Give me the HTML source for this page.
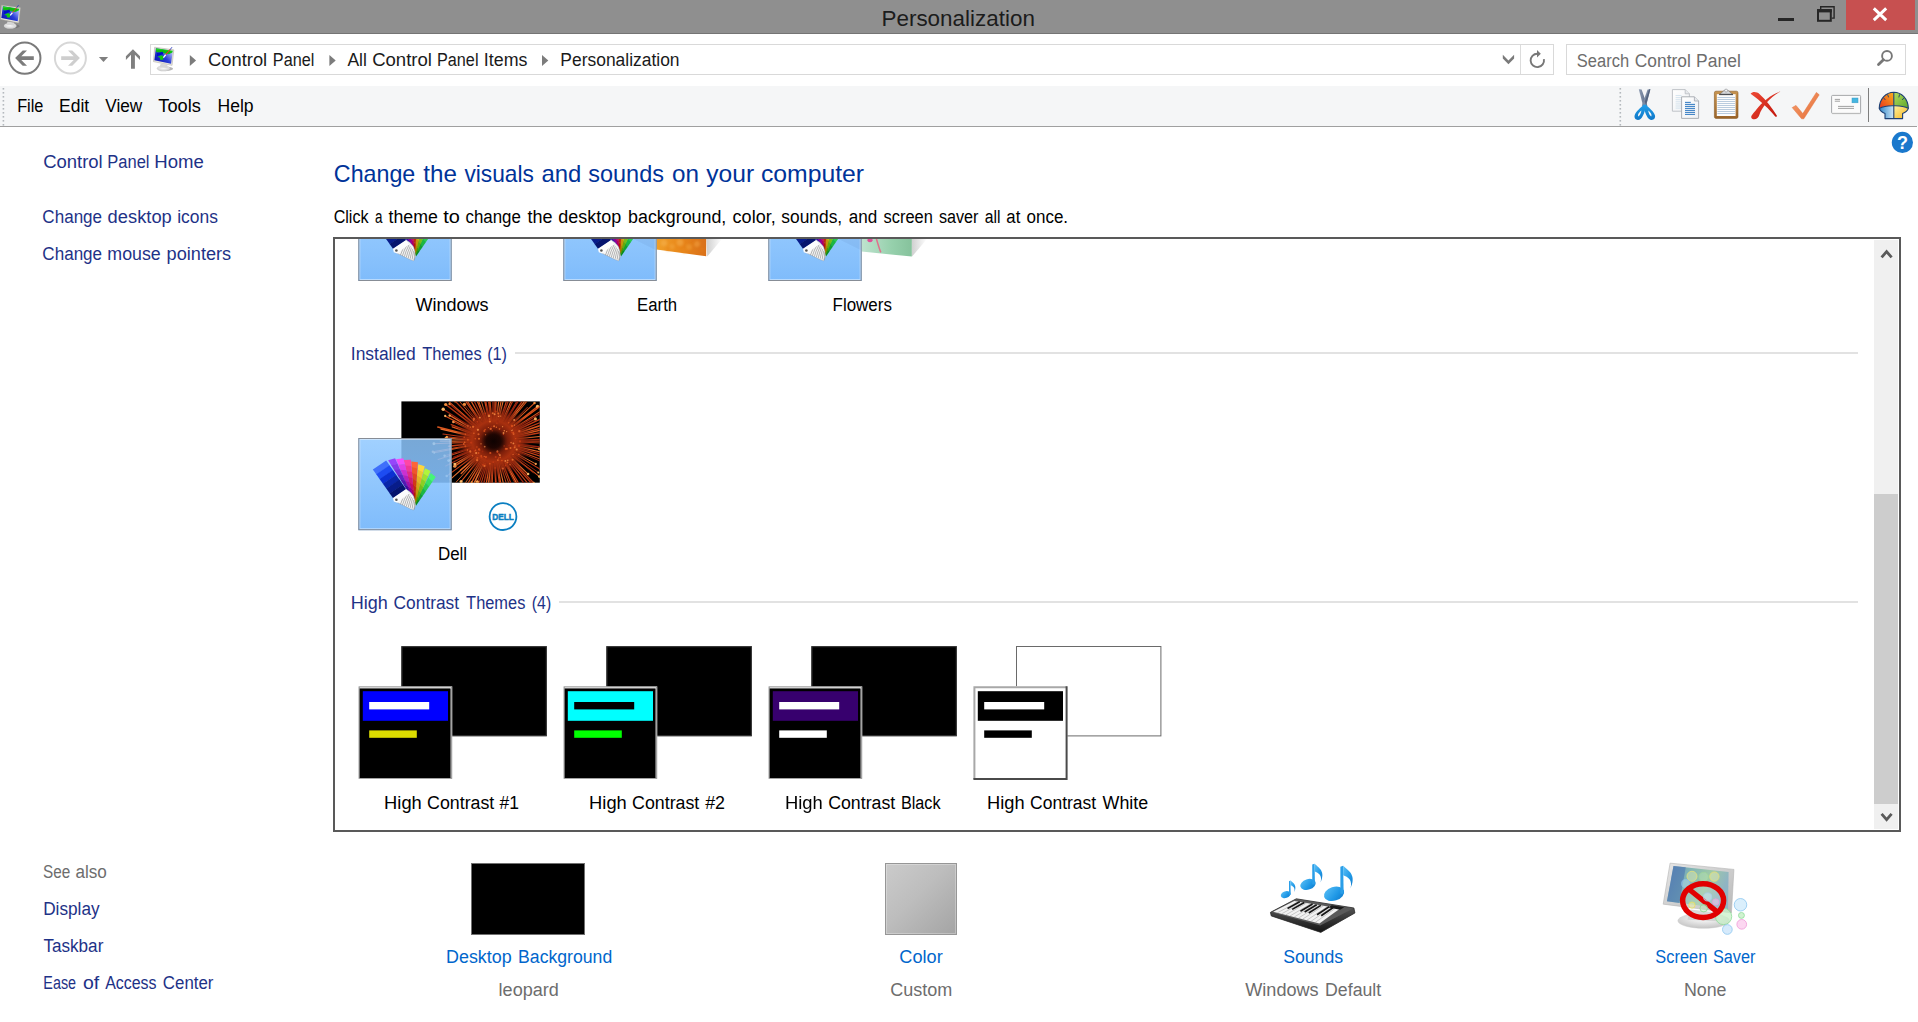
<!DOCTYPE html>
<html lang="en"><head><meta charset="utf-8"><title>Personalization</title>
<style>
html,body{margin:0;padding:0}
body{width:1918px;height:1022px;overflow:hidden;background:#fff;font-family:"Liberation Sans", sans-serif;position:relative}
.t{position:absolute;white-space:nowrap;line-height:1;transform-origin:0 0;display:block}
.abs{position:absolute}
svg{position:absolute;left:0;top:0;overflow:visible}
#titlebar{left:0;top:0;width:1918px;height:33px;background:#8f8f8f;border-bottom:1px solid #747474}
#closebtn{left:1846px;top:0;width:69px;height:30px;background:#c75050}
#navrow{left:0;top:34px;width:1918px;height:52px;background:#fff}
#addr{left:150px;top:44px;width:1402px;height:29px;border:1px solid #d9d9d9;background:#fff}
#addrsep{left:1520px;top:45px;width:1px;height:29px;background:#dcdcdc}
#search{left:1566px;top:44px;width:338px;height:29px;border:1px solid #d9d9d9;background:#fff}
#menubar{left:0;top:86px;width:1918px;height:40px;background:#f5f6f7}
#menuline{left:0;top:126px;width:1917px;height:1px;background:#a0a0a0}
#list{left:333px;top:237px;width:1564px;height:591px;border:2px solid #595959;background:#fff}
#sbar{left:1874px;top:240px;width:24px;height:589px;background:#f0f0f0}
#thumb{left:1874px;top:494px;width:24px;height:310px;background:#cdcdcd}
.gline{height:2px;background:#e2e2e2}
#deskbg{left:471px;top:863px;width:112px;height:70px;background:#000;border:1px solid #707070}
#colorsw{left:885px;top:863px;width:70px;height:70px;border:1px solid #969696;box-shadow:inset 0 0 0 1px rgba(255,255,255,0.28);background:linear-gradient(135deg,#cbcbcb 0%,#bdbdbd 45%,#a4a4a4 100%)}
</style></head>
<body>
<div id="titlebar" class="abs"></div>
<div id="closebtn" class="abs"></div>
<div id="navrow" class="abs"></div>
<div id="addr" class="abs"></div><div id="addrsep" class="abs"></div>
<div id="search" class="abs"></div>
<div id="menubar" class="abs"></div><div id="menuline" class="abs"></div>
<div id="list" class="abs"></div>
<div id="sbar" class="abs"></div><div id="thumb" class="abs"></div>
<div class="abs gline" style="left:515px;top:352px;width:1343px"></div>
<div class="abs gline" style="left:559px;top:601px;width:1299px"></div>
<div id="deskbg" class="abs"></div>
<div id="colorsw" class="abs"></div>
<svg width="1918" height="1022" viewBox="0 0 1918 1022">
<g id="i-title"><defs><linearGradient id="m0_5a" x1="0" y1="1" x2="1" y2="0.2"><stop offset="0" stop-color="#0008a8"/><stop offset="0.55" stop-color="#2a3fd8"/><stop offset="1" stop-color="#c9d0ff"/></linearGradient><radialGradient id="m0_5b" cx="0.5" cy="0.4" r="0.6"><stop offset="0" stop-color="#ffffff"/><stop offset="1" stop-color="#c9c9c9"/></radialGradient></defs><ellipse cx="12.50" cy="26.30" rx="7.20" ry="2.20" fill="#5a5a5a" opacity="0.45"/><ellipse cx="10.20" cy="25.90" rx="6.40" ry="2.90" fill="url(#m0_5b)"/><polygon points="7.50,21.50 14.00,22.50 14.50,25.50 6.50,25.00" fill="#d6d6d6"/><polygon points="1.60,5.20 20.40,7.80 18.70,23.00 0.40,19.30" fill="#e9e6dc" stroke="#a9a79f" stroke-width="0.5"/><polygon points="2.80,6.30 19.50,8.70 17.70,21.30 1.30,18.10" fill="url(#m0_5a)"/><polygon points="2.80,6.30 19.50,8.70 18.80,10.60 15.00,12.00 10.00,11.00 3.30,10.00" fill="#1fd11f"/><polygon points="3.00,8.20 9.50,7.60 18.90,9.60 16.00,11.60 10.00,10.60 3.30,10.00" fill="#10b810"/><polygon points="3.80,11.00 9.60,9.60 10.00,12.00 6.00,13.40 3.90,14.00" fill="#0010c8"/><polygon points="4.40,14.60 8.40,13.00 10.40,14.60 9.80,17.40 7.00,17.60 6.80,15.60" fill="#12c812"/><line x1="18.60" y1="5.20" x2="16.60" y2="7.80" stroke="#3040c0" stroke-width="0.90"/><line x1="16.80" y1="7.60" x2="12.20" y2="12.80" stroke="#e33a26" stroke-width="1.00"/><line x1="12.40" y1="12.60" x2="10.20" y2="15.40" stroke="#ffffff" stroke-width="1.30"/></g>
<g id="i-winbtn"><rect x="1778" y="18" width="16" height="3" fill="#262626"/><path d="M1820.7 9.2V6.7H1834.1V18.1H1831.8" fill="none" stroke="#262626" stroke-width="1.4"/><rect x="1818" y="10.2" width="12.8" height="10.6" fill="none" stroke="#262626" stroke-width="2"/><rect x="1817" y="9.2" width="14.8" height="3.2" fill="#262626"/><path d="M1873.8 8.4L1886.2 20.2M1886.2 8.4L1873.8 20.2" stroke="#fff" stroke-width="3"/></g>
<g id="i-nav"><circle cx="24.75" cy="58.1" r="15.7" fill="none" stroke="#7a7a7a" stroke-width="2"/><polygon points="15.1,58.1 22.7,50.5 27.0,50.5 21.3,56.2 33.8,56.2 33.8,59.9 21.3,59.9 27.0,65.7 22.7,65.7" fill="#7c7c7c"/><circle cx="70.4" cy="58.1" r="15.5" fill="none" stroke="#d7d7d7" stroke-width="2"/><polygon points="79.9,58.1 72.3,50.5 68.0,50.5 73.7,56.2 61.2,56.2 61.2,59.9 73.7,59.9 68.0,65.7 72.3,65.7" fill="#cecece"/><polygon points="98.9,57.0 108.1,57.0 103.5,62.0" fill="#7f7f7f"/><polygon points="132.95,49.3 125.9,56.3 125.9,59.9 131.0,54.8 131.0,68.7 134.9,68.7 134.9,54.8 140.0,59.9 140.0,56.3" fill="#7f7f7f"/></g>
<g id="i-addr"><defs><linearGradient id="m153_47a" x1="0" y1="1" x2="1" y2="0.2"><stop offset="0" stop-color="#0008a8"/><stop offset="0.55" stop-color="#2a3fd8"/><stop offset="1" stop-color="#c9d0ff"/></linearGradient><radialGradient id="m153_47b" cx="0.5" cy="0.4" r="0.6"><stop offset="0" stop-color="#ffffff"/><stop offset="1" stop-color="#c9c9c9"/></radialGradient></defs><ellipse cx="165.75" cy="68.73" rx="7.34" ry="2.24" fill="#5a5a5a" opacity="0.45"/><ellipse cx="163.40" cy="68.32" rx="6.53" ry="2.96" fill="url(#m153_47b)"/><polygon points="160.65,63.83 167.28,64.85 167.79,67.91 159.63,67.40" fill="#d6d6d6"/><polygon points="154.63,47.20 173.81,49.86 172.07,65.36 153.41,61.59" fill="#e9e6dc" stroke="#a9a79f" stroke-width="0.5"/><polygon points="155.86,48.33 172.89,50.77 171.05,63.63 154.33,60.36" fill="url(#m153_47a)"/><polygon points="155.86,48.33 172.89,50.77 172.18,52.71 168.30,54.14 163.20,53.12 156.37,52.10" fill="#1fd11f"/><polygon points="156.06,50.26 162.69,49.65 172.28,51.69 169.32,53.73 163.20,52.71 156.37,52.10" fill="#10b810"/><polygon points="156.88,53.12 162.79,51.69 163.20,54.14 159.12,55.57 156.98,56.18" fill="#0010c8"/><polygon points="157.49,56.79 161.57,55.16 163.61,56.79 163.00,59.65 160.14,59.85 159.94,57.81" fill="#12c812"/><line x1="171.97" y1="47.20" x2="169.93" y2="49.86" stroke="#3040c0" stroke-width="0.92"/><line x1="170.14" y1="49.65" x2="165.44" y2="54.96" stroke="#e33a26" stroke-width="1.02"/><line x1="165.65" y1="54.75" x2="163.40" y2="57.61" stroke="#ffffff" stroke-width="1.33"/><polygon points="189.8,54.9 196.10000000000002,60.4 189.8,65.9" fill="#7c7c7c"/><polygon points="329.4,54.9 335.7,60.4 329.4,65.9" fill="#7c7c7c"/><polygon points="542.0,54.9 548.3,60.4 542.0,65.9" fill="#7c7c7c"/><polygon points="1502.8,54.8 1502.8,58.5 1508.45,64.2 1514.1,58.5 1514.1,54.8 1508.45,60.5" fill="#7a7a7a"/><path d="M1543.9 59.2A6.7 6.7 0 1 1 1537.3 53.7" fill="none" stroke="#777" stroke-width="1.9"/><polygon points="1537.0,50.1 1540.8,53.8 1537.0,57.6" fill="#777"/><circle cx="1887.0" cy="55.9" r="4.9" fill="none" stroke="#777" stroke-width="1.9"/><line x1="1883.4" y1="59.8" x2="1878.5" y2="64.6" stroke="#777" stroke-width="2.8" stroke-linecap="round"/></g>
<g id="i-menu"><rect x="2.6" y="88" width="1.6" height="1.6" fill="#b4b8bd"/><rect x="2.6" y="92" width="1.6" height="1.6" fill="#b4b8bd"/><rect x="2.6" y="96" width="1.6" height="1.6" fill="#b4b8bd"/><rect x="2.6" y="100" width="1.6" height="1.6" fill="#b4b8bd"/><rect x="2.6" y="104" width="1.6" height="1.6" fill="#b4b8bd"/><rect x="2.6" y="108" width="1.6" height="1.6" fill="#b4b8bd"/><rect x="2.6" y="112" width="1.6" height="1.6" fill="#b4b8bd"/><rect x="2.6" y="116" width="1.6" height="1.6" fill="#b4b8bd"/><rect x="2.6" y="120" width="1.6" height="1.6" fill="#b4b8bd"/><rect x="2.6" y="124" width="1.6" height="1.6" fill="#b4b8bd"/></g>
<g id="i-tb"><defs>
<linearGradient id="tbBlade" x1="0" y1="0" x2="1" y2="0"><stop offset="0" stop-color="#8d9bb2"/><stop offset="1" stop-color="#55657f"/></linearGradient>
<linearGradient id="tbHandle" x1="0" y1="0" x2="0" y2="1"><stop offset="0" stop-color="#22a0ea"/><stop offset="1" stop-color="#0f77c8"/></linearGradient>
<linearGradient id="tbPage" x1="0" y1="0" x2="1" y2="1"><stop offset="0" stop-color="#ffffff"/><stop offset="1" stop-color="#eef0f3"/></linearGradient>
<linearGradient id="tbWood" x1="0" y1="0" x2="0" y2="1"><stop offset="0" stop-color="#c79450"/><stop offset="1" stop-color="#9a642a"/></linearGradient>
<linearGradient id="tbRed" x1="0" y1="0" x2="1" y2="1"><stop offset="0" stop-color="#ee4a36"/><stop offset="1" stop-color="#c2160c"/></linearGradient>
<linearGradient id="tbChk" x1="0" y1="0" x2="1" y2="1"><stop offset="0" stop-color="#f6a271"/><stop offset="1" stop-color="#e56a34"/></linearGradient>
<linearGradient id="shO" x1="0" y1="1" x2="1" y2="0"><stop offset="0" stop-color="#e8321a"/><stop offset="1" stop-color="#fbb21c"/></linearGradient>
<linearGradient id="shG" x1="0" y1="0" x2="1" y2="1"><stop offset="0" stop-color="#b6dc5a"/><stop offset="1" stop-color="#5aa62c"/></linearGradient>
<linearGradient id="shB" x1="0" y1="0" x2="1" y2="0"><stop offset="0" stop-color="#2f86c8"/><stop offset="1" stop-color="#cfe6f6"/></linearGradient>
<linearGradient id="shY" x1="0" y1="0" x2="1" y2="1"><stop offset="0" stop-color="#fff1a0"/><stop offset="1" stop-color="#f4b41a"/></linearGradient>
</defs><rect x="1619.5" y="88" width="1.6" height="1.6" fill="#b4b8bd"/><rect x="1619.5" y="92" width="1.6" height="1.6" fill="#b4b8bd"/><rect x="1619.5" y="96" width="1.6" height="1.6" fill="#b4b8bd"/><rect x="1619.5" y="100" width="1.6" height="1.6" fill="#b4b8bd"/><rect x="1619.5" y="104" width="1.6" height="1.6" fill="#b4b8bd"/><rect x="1619.5" y="108" width="1.6" height="1.6" fill="#b4b8bd"/><rect x="1619.5" y="112" width="1.6" height="1.6" fill="#b4b8bd"/><rect x="1619.5" y="116" width="1.6" height="1.6" fill="#b4b8bd"/><rect x="1619.5" y="120" width="1.6" height="1.6" fill="#b4b8bd"/><rect x="1619.5" y="124" width="1.6" height="1.6" fill="#b4b8bd"/><polygon points="1638.8,89.2 1641.6,89.4 1647.4,105.8 1643.4,107.0" fill="url(#tbBlade)"/><polygon points="1650.4,89.2 1647.6,89.4 1641.8,105.8 1645.8,107.0" fill="#7b8aa3"/><polygon points="1650.4,89.2 1649.2,89.3 1644.8,101.6 1646.0,105.2" fill="#55647e"/><path d="M1643.8 104.2C1641 108 1635.6 111 1634.6 115.6C1633.8 119.6 1638 121.4 1640.8 118.8C1643.6 116.2 1645 110.6 1646 106Z M1638.4 116.4C1637.4 115.4 1638.6 112.8 1641.4 110.6C1641 113.2 1639.8 116 1638.4 116.4Z" fill="url(#tbHandle)" fill-rule="evenodd"/><path d="M1645.8 104.2C1648.6 108 1654 111 1655 115.6C1655.8 119.6 1651.6 121.4 1648.8 118.8C1646 116.2 1644.6 110.6 1643.6 106Z M1651.2 116.4C1652.2 115.4 1651 112.8 1648.2 110.6C1648.6 113.2 1649.8 116 1651.2 116.4Z" fill="url(#tbHandle)" fill-rule="evenodd"/><path d="M1672.4 89.6H1685.2L1689.4 93.8V111.2H1672.4Z" fill="url(#tbPage)" stroke="#b9bcc2" stroke-width="0.9"/><path d="M1685.2 89.6V93.8H1689.4" fill="#e6e8ec" stroke="#b9bcc2" stroke-width="0.8"/><line x1="1675.6" y1="95.5" x2="1681.5" y2="95.5" stroke="#c9dbea" stroke-width="0.7"/><line x1="1675.6" y1="97.6" x2="1681.5" y2="97.6" stroke="#c9dbea" stroke-width="0.7"/><line x1="1675.6" y1="99.7" x2="1681.5" y2="99.7" stroke="#c9dbea" stroke-width="0.7"/><line x1="1675.6" y1="101.8" x2="1681.5" y2="101.8" stroke="#c9dbea" stroke-width="0.7"/><line x1="1675.6" y1="103.9" x2="1681.5" y2="103.9" stroke="#c9dbea" stroke-width="0.7"/><line x1="1675.6" y1="106.0" x2="1681.5" y2="106.0" stroke="#c9dbea" stroke-width="0.7"/><line x1="1675.6" y1="108.1" x2="1681.5" y2="108.1" stroke="#c9dbea" stroke-width="0.7"/><path d="M1681.6 96.8H1694.4L1698.6 101V118.4H1681.6Z" fill="url(#tbPage)" stroke="#a3a7ae" stroke-width="0.9"/><path d="M1694.4 96.8V101H1698.6" fill="#e6e8ec" stroke="#a3a7ae" stroke-width="0.8"/><line x1="1685" y1="102.4" x2="1690.8" y2="102.4" stroke="#3f82c6" stroke-width="1.1"/><line x1="1685" y1="104.4" x2="1695" y2="104.4" stroke="#3f82c6" stroke-width="1.1"/><line x1="1685" y1="106.4" x2="1695" y2="106.4" stroke="#3f82c6" stroke-width="1.1"/><line x1="1685" y1="108.4" x2="1695" y2="108.4" stroke="#3f82c6" stroke-width="1.1"/><line x1="1685" y1="110.4" x2="1695" y2="110.4" stroke="#3f82c6" stroke-width="1.1"/><line x1="1685" y1="112.4" x2="1695" y2="112.4" stroke="#3f82c6" stroke-width="1.1"/><line x1="1685" y1="114.4" x2="1695" y2="114.4" stroke="#3f82c6" stroke-width="1.1"/><rect x="1714.4" y="91.2" width="23.6" height="27.2" rx="1.6" fill="url(#tbWood)" stroke="#8a5a24" stroke-width="0.6"/><rect x="1716.8" y="94.2" width="18.8" height="21.8" fill="#fdfdfd"/><line x1="1717.4" y1="97.5" x2="1735" y2="97.5" stroke="#b2c6da" stroke-width="0.9"/><line x1="1717.4" y1="99.5" x2="1735" y2="99.5" stroke="#b2c6da" stroke-width="0.9"/><line x1="1717.4" y1="101.5" x2="1735" y2="101.5" stroke="#b2c6da" stroke-width="0.9"/><line x1="1717.4" y1="103.5" x2="1735" y2="103.5" stroke="#b2c6da" stroke-width="0.9"/><line x1="1717.4" y1="105.5" x2="1735" y2="105.5" stroke="#b2c6da" stroke-width="0.9"/><line x1="1717.4" y1="107.5" x2="1735" y2="107.5" stroke="#b2c6da" stroke-width="0.9"/><line x1="1717.4" y1="109.5" x2="1735" y2="109.5" stroke="#b2c6da" stroke-width="0.9"/><line x1="1717.4" y1="111.5" x2="1735" y2="111.5" stroke="#b2c6da" stroke-width="0.9"/><line x1="1717.4" y1="113.5" x2="1735" y2="113.5" stroke="#b2c6da" stroke-width="0.9"/><polygon points="1719.4,94.6 1724.2,90.4 1728.0,90.4 1732.8,94.6" fill="#d9dadc" stroke="#6d6f73" stroke-width="0.6"/><rect x="1719.2" y="93.8" width="13.8" height="1.3" fill="#4d4f53"/><circle cx="1726.1" cy="90.6" r="1.5" fill="#f5f5f5" stroke="#8a8c90" stroke-width="0.6"/><path d="M1780.4 91.6C1771 94.2 1761.6 102.6 1756.4 109.6C1753.4 113.8 1749.8 116.2 1751.8 118.4C1754.6 120.8 1758.6 118.4 1759.4 114.8C1761.6 108 1769 98 1780.4 91.6Z" fill="url(#tbRed)"/><path d="M1750.6 93.8C1752.6 91.2 1757 91.8 1759.4 94C1766 100 1772.4 108.2 1776.8 115.6C1777.2 116.8 1776 117.2 1775.2 116.4C1769.6 109.6 1760.6 101 1750.6 93.8Z" fill="url(#tbRed)"/><polygon points="1792.2,107.6 1796.0,105.4 1802.8,113.6 1816.4,92.4 1819.2,94.8 1803.8,118.8 1801.6,118.8" fill="url(#tbChk)" stroke="#e0733f" stroke-width="0.5" stroke-linejoin="round"/><rect x="1831.6" y="95.4" width="29" height="18" rx="1" fill="#fbfbfb" stroke="#9c9ea2" stroke-width="0.9"/><rect x="1832.2" y="113.2" width="28.6" height="0.9" fill="#bdbdbd"/><rect x="1852" y="98" width="6" height="4.8" fill="#46b6e0" stroke="#3a9cc6" stroke-width="0.5"/><line x1="1834.8" y1="99.4" x2="1840" y2="99.4" stroke="#8a8a8a" stroke-width="0.8"/><line x1="1834.8" y1="101.2" x2="1840" y2="101.2" stroke="#8a8a8a" stroke-width="0.8"/><line x1="1838" y1="106.4" x2="1854" y2="106.4" stroke="#8a8a8a" stroke-width="0.8"/><line x1="1838" y1="108.4" x2="1854" y2="108.4" stroke="#8a8a8a" stroke-width="0.8"/><rect x="1868" y="88" width="1" height="34" fill="#7e7e7e"/><path d="M1893.8 92.2C1886 92.2 1879.6 98.6 1879.2 108.4C1883 106.4 1888 105.6 1893.8 105.8Z" fill="url(#shO)"/><path d="M1893.8 92.2C1901.6 92.2 1908 98.6 1908.4 108.4C1904.6 106.4 1899.6 105.6 1893.8 105.8Z" fill="url(#shG)"/><path d="M1879.2 108.4C1883 106.4 1888 105.6 1893.8 105.8V118.6H1885V113.4C1882 112.4 1880 110.6 1879.2 108.4Z" fill="url(#shB)"/><path d="M1908.4 108.4C1904.6 106.4 1899.6 105.6 1893.8 105.8V118.6H1902.6V113.4C1905.6 112.4 1907.6 110.6 1908.4 108.4Z" fill="url(#shY)"/><path d="M1893.8 92.2C1886 92.2 1879.6 98.6 1879.2 108.4C1880 110.6 1882 112.4 1885 113.4V118.6H1902.6V113.4C1905.6 112.4 1907.6 110.6 1908.4 108.4C1908 98.6 1901.6 92.2 1893.8 92.2ZM1893.8 92.2V118.6M1879.2 108.4C1883 106.4 1888 105.6 1893.8 105.8C1899.6 105.6 1904.6 106.4 1908.4 108.4" fill="none" stroke="#1d3f73" stroke-width="1.1" stroke-linejoin="round"/><line x1="1883.4" y1="97.6" x2="1885.4" y2="100" stroke="#1d3f73" stroke-width="0.9"/><line x1="1887.6" y1="94.4" x2="1888.6" y2="97.4" stroke="#1d3f73" stroke-width="0.9"/><line x1="1899.6" y1="94.4" x2="1898.8" y2="97.4" stroke="#1d3f73" stroke-width="0.9"/><line x1="1904.2" y1="97.6" x2="1902.2" y2="100" stroke="#1d3f73" stroke-width="0.9"/></g>
<g id="i-help"><circle cx="1902.4" cy="142.4" r="10.6" fill="#1a78cc"/><text x="1902.4" y="149.0" text-anchor="middle" font-family="Liberation Sans, sans-serif" font-weight="bold" font-size="18" fill="#fff">?</text></g>
<g id="i-toprow"><defs><clipPath id="trc"><rect x="335" y="239" width="1539" height="60"/></clipPath><linearGradient id="earthg" x1="0" y1="0" x2="1" y2="0"><stop offset="0" stop-color="#f0a02a"/><stop offset="0.5" stop-color="#e8861a"/><stop offset="1" stop-color="#d9701a"/></linearGradient><linearGradient id="flowg" x1="0" y1="0" x2="1" y2="0"><stop offset="0" stop-color="#bfe3cf"/><stop offset="0.6" stop-color="#96d0ac"/><stop offset="1" stop-color="#86c29c"/></linearGradient><filter id="blr" x="-50%" y="-50%" width="200%" height="200%"><feGaussianBlur stdDeviation="0.9"/></filter><linearGradient id="shadg" x1="0" y1="0" x2="1" y2="0"><stop offset="0" stop-color="#cfcfcf"/><stop offset="1" stop-color="#ffffff"/></linearGradient></defs><g clip-path="url(#trc)"><polygon points="706.5,239 722,239 707.2,256.6" fill="url(#shadg)"/><polygon points="656.5,232 706.2,232 706.2,256.3 656.5,249.6" fill="url(#earthg)"/><circle cx="664" cy="243" r="3.2" fill="#f8b85a" opacity="0.44" filter="url(#blr)"/><circle cx="672" cy="246.5" r="2.6" fill="#f6ac48" opacity="0.40" filter="url(#blr)"/><circle cx="680" cy="242.5" r="3.4" fill="#f9bc60" opacity="0.40" filter="url(#blr)"/><circle cx="689" cy="247" r="3.0" fill="#f4a63c" opacity="0.44" filter="url(#blr)"/><circle cx="697" cy="244" r="3.0" fill="#f8b050" opacity="0.40" filter="url(#blr)"/><circle cx="702" cy="250" r="2.4" fill="#e27a16" opacity="0.48" filter="url(#blr)"/><circle cx="668" cy="249" r="2.2" fill="#e8881c" opacity="0.48" filter="url(#blr)"/><circle cx="684" cy="251" r="2.4" fill="#e98a20" opacity="0.40" filter="url(#blr)"/><circle cx="693" cy="240.5" r="2.2" fill="#e07818" opacity="0.40" filter="url(#blr)"/><polygon points="911.4,239 927,239 912,256.6" fill="url(#shadg)"/><polygon points="861.5,232 911.8,232 911.8,256.6 861.5,251.6" fill="url(#flowg)"/><path d="M876.2 238C877.6 243 879.0 248 880.8 252.4" fill="none" stroke="#e0708c" stroke-width="1.5"/><ellipse cx="870" cy="240.2" rx="2.6" ry="2.0" fill="#e0509a"/><defs><linearGradient id="btt0" x1="0" y1="0" x2="0" y2="1"><stop offset="0" stop-color="#8fc8ff" stop-opacity="0.84"/><stop offset="1" stop-color="#78b8fb" stop-opacity="0.95"/></linearGradient></defs><rect x="358.3" y="188.8" width="93.4" height="92.2" fill="url(#btt0)"/><rect x="359.8" y="190.3" width="90.4" height="89.2" fill="none" stroke="#ffffff" stroke-opacity="0.45" stroke-width="1"/><rect x="358.8" y="189.3" width="92.4" height="91.2" fill="none" stroke="#878d96" stroke-width="1"/><polygon points="430.85,223.86 435.69,227.84 432.21,232.92 428.07,228.95" fill="#46f578"/><polygon points="428.23,228.67 432.41,232.63 428.93,237.71 425.45,233.76" fill="#38e067"/><polygon points="425.61,233.47 429.12,237.42 425.64,242.50 422.83,238.57" fill="#2acb56"/><polygon points="422.99,238.28 425.84,242.21 422.36,247.29 420.21,243.38" fill="#1cb645"/><polygon points="420.37,243.09 422.56,247.00 419.08,252.08 417.59,248.19" fill="#0ea134"/><polygon points="417.75,247.90 419.28,251.79 415.80,256.87 414.97,252.99" fill="#008c23"/><polygon points="424.93,219.01 430.63,221.70 428.01,227.60 423.16,224.62" fill="#b0f53c"/><polygon points="423.26,224.31 428.16,227.27 425.53,233.16 421.49,229.92" fill="#9de230"/><polygon points="421.59,229.60 425.68,232.83 423.06,238.72 419.82,235.21" fill="#8acf24"/><polygon points="419.92,234.89 423.20,238.39 420.58,244.28 418.15,240.50" fill="#76bc18"/><polygon points="418.25,240.18 420.73,243.95 418.10,249.85 416.48,245.79" fill="#63a90c"/><polygon points="416.58,245.48 418.25,249.51 415.63,255.41 414.82,251.09" fill="#509600"/><polygon points="418.25,215.03 424.71,217.08 423.10,223.45 417.59,220.96" fill="#ffd63c"/><polygon points="417.63,220.63 423.19,223.09 421.57,229.46 416.96,226.56" fill="#f0c530"/><polygon points="417.00,226.23 421.66,229.10 420.05,235.47 416.33,232.16" fill="#e1b424"/><polygon points="416.37,231.82 420.14,235.11 418.52,241.48 415.70,237.76" fill="#d2a418"/><polygon points="415.74,237.42 418.61,241.12 417.00,247.49 415.08,243.35" fill="#c3930c"/><polygon points="415.11,243.02 417.09,247.13 415.47,253.50 414.45,248.95" fill="#b48200"/><polygon points="411.26,212.23 417.93,213.09 417.44,219.75 411.67,218.20" fill="#ff6437"/><polygon points="411.65,217.86 417.46,219.37 416.97,226.03 412.07,223.84" fill="#f0562c"/><polygon points="412.05,223.50 417.00,225.65 416.50,232.31 412.46,229.47" fill="#e14721"/><polygon points="412.44,229.13 416.53,231.93 416.04,238.59 412.86,235.10" fill="#d23916"/><polygon points="412.84,234.76 416.06,238.21 415.57,244.87 413.25,240.74" fill="#c32a0b"/><polygon points="413.23,240.40 415.60,244.49 415.10,251.14 413.65,246.37" fill="#b41c00"/><polygon points="403.72,210.72 410.83,210.51 411.43,217.09 405.13,216.54" fill="#ff46a5"/><polygon points="405.05,216.21 411.40,216.72 412.01,223.30 406.46,222.03" fill="#f03895"/><polygon points="406.38,221.70 411.97,222.92 412.58,229.50 407.78,227.52" fill="#e12a85"/><polygon points="407.70,227.19 412.55,229.13 413.16,235.71 409.11,233.01" fill="#d21c75"/><polygon points="409.03,232.68 413.12,235.34 413.73,241.92 410.44,238.50" fill="#c30e65"/><polygon points="410.36,238.17 413.70,241.55 414.30,248.13 411.77,243.99" fill="#b40055"/><polygon points="395.97,210.08 403.29,209.00 404.93,215.35 398.33,215.67" fill="#f550fa"/><polygon points="398.20,215.35 404.83,214.99 406.47,221.35 400.55,220.94" fill="#e040e6"/><polygon points="400.42,220.63 406.38,220.99 408.01,227.34 402.78,226.22" fill="#cb30d2"/><polygon points="402.64,225.90 407.92,226.98 409.55,233.33 405.00,231.49" fill="#b620be"/><polygon points="404.87,231.18 409.46,232.97 411.10,239.32 407.23,236.77" fill="#a110aa"/><polygon points="407.09,236.45 411.01,238.96 412.64,245.31 409.45,242.04" fill="#8c0096"/><polygon points="388.11,211.16 395.11,209.00 397.73,214.90 391.33,216.21" fill="#9646fa"/><polygon points="391.15,215.93 397.59,214.56 400.21,220.46 394.36,220.99" fill="#853ae8"/><polygon points="394.18,220.70 400.06,220.13 402.69,226.02 397.39,225.76" fill="#742fd6"/><polygon points="397.21,225.47 402.54,225.69 405.16,231.58 400.42,230.53" fill="#6223c4"/><polygon points="400.24,230.24 405.01,231.25 407.64,237.14 403.45,235.30" fill="#5118b2"/><polygon points="403.27,235.02 407.49,236.81 410.11,242.71 406.49,240.07" fill="#400ca0"/><polygon points="396.83,253.14 406.30,240.22 409.75,242.59 413.41,246.68 414.92,251.84 415.56,256.58 413.62,260.89 410.18,259.59" fill="#f6f6f6" stroke="#8e8e8e" stroke-width="0.35"/><path d="M406.74 241.73Q402.11 249.48 400.49 255.07" fill="none" stroke="#5e5e5e" stroke-width="0.45"/><path d="M407.90 243.23Q403.88 250.44 402.43 255.81" fill="none" stroke="#5e5e5e" stroke-width="0.45"/><path d="M409.07 244.74Q405.64 251.41 404.37 256.55" fill="none" stroke="#5e5e5e" stroke-width="0.45"/><path d="M410.24 246.25Q407.41 252.38 406.30 257.29" fill="none" stroke="#5e5e5e" stroke-width="0.45"/><path d="M411.41 247.75Q409.18 253.35 408.24 258.03" fill="none" stroke="#5e5e5e" stroke-width="0.45"/><path d="M412.58 249.26Q410.95 254.32 410.18 258.76" fill="none" stroke="#5e5e5e" stroke-width="0.45"/><path d="M413.75 250.77Q412.72 255.29 412.12 259.50" fill="none" stroke="#5e5e5e" stroke-width="0.45"/><path d="M414.92 252.27Q414.49 256.26 414.06 260.24" fill="none" stroke="#5e5e5e" stroke-width="0.45"/><polygon points="372.83,220.30 386.18,211.26 389.69,216.34 376.38,225.34" fill="#3f6ffb"/><polygon points="376.18,225.06 389.49,216.05 393.01,221.13 379.74,230.10" fill="#1d4cf2"/><polygon points="379.54,229.81 392.81,220.84 396.33,225.92 383.09,234.85" fill="#0b30d2"/><polygon points="382.89,234.57 396.13,225.63 399.65,230.71 386.45,239.61" fill="#0a26aa"/><polygon points="386.25,239.32 399.45,230.42 402.97,235.50 389.80,244.36" fill="#081c8a"/><polygon points="389.60,244.08 402.77,235.21 406.29,240.29 393.16,249.12" fill="#05146e"/><polygon points="392.96,248.72 406.09,239.90 409.10,244.31 397.26,253.57 393.82,252.27" fill="#fcfcfc"/><circle cx="396.40" cy="250.55" r="1.3" fill="#555"/><defs><linearGradient id="btt1" x1="0" y1="0" x2="0" y2="1"><stop offset="0" stop-color="#8fc8ff" stop-opacity="0.84"/><stop offset="1" stop-color="#78b8fb" stop-opacity="0.95"/></linearGradient></defs><rect x="563.3" y="188.8" width="93.4" height="92.2" fill="url(#btt1)"/><rect x="564.8" y="190.3" width="90.4" height="89.2" fill="none" stroke="#ffffff" stroke-opacity="0.45" stroke-width="1"/><rect x="563.8" y="189.3" width="92.4" height="91.2" fill="none" stroke="#878d96" stroke-width="1"/><polygon points="635.85,223.86 640.69,227.84 637.21,232.92 633.07,228.95" fill="#46f578"/><polygon points="633.23,228.67 637.41,232.63 633.93,237.71 630.45,233.76" fill="#38e067"/><polygon points="630.61,233.47 634.12,237.42 630.64,242.50 627.83,238.57" fill="#2acb56"/><polygon points="627.99,238.28 630.84,242.21 627.36,247.29 625.21,243.38" fill="#1cb645"/><polygon points="625.37,243.09 627.56,247.00 624.08,252.08 622.59,248.19" fill="#0ea134"/><polygon points="622.75,247.90 624.28,251.79 620.80,256.87 619.97,252.99" fill="#008c23"/><polygon points="629.93,219.01 635.63,221.70 633.01,227.60 628.16,224.62" fill="#b0f53c"/><polygon points="628.26,224.31 633.16,227.27 630.53,233.16 626.49,229.92" fill="#9de230"/><polygon points="626.59,229.60 630.68,232.83 628.06,238.72 624.82,235.21" fill="#8acf24"/><polygon points="624.92,234.89 628.20,238.39 625.58,244.28 623.15,240.50" fill="#76bc18"/><polygon points="623.25,240.18 625.73,243.95 623.10,249.85 621.48,245.79" fill="#63a90c"/><polygon points="621.58,245.48 623.25,249.51 620.63,255.41 619.82,251.09" fill="#509600"/><polygon points="623.25,215.03 629.71,217.08 628.10,223.45 622.59,220.96" fill="#ffd63c"/><polygon points="622.63,220.63 628.19,223.09 626.57,229.46 621.96,226.56" fill="#f0c530"/><polygon points="622.00,226.23 626.66,229.10 625.05,235.47 621.33,232.16" fill="#e1b424"/><polygon points="621.37,231.82 625.14,235.11 623.52,241.48 620.70,237.76" fill="#d2a418"/><polygon points="620.74,237.42 623.61,241.12 622.00,247.49 620.08,243.35" fill="#c3930c"/><polygon points="620.11,243.02 622.09,247.13 620.47,253.50 619.45,248.95" fill="#b48200"/><polygon points="616.26,212.23 622.93,213.09 622.44,219.75 616.67,218.20" fill="#ff6437"/><polygon points="616.65,217.86 622.46,219.37 621.97,226.03 617.07,223.84" fill="#f0562c"/><polygon points="617.05,223.50 622.00,225.65 621.50,232.31 617.46,229.47" fill="#e14721"/><polygon points="617.44,229.13 621.53,231.93 621.04,238.59 617.86,235.10" fill="#d23916"/><polygon points="617.84,234.76 621.06,238.21 620.57,244.87 618.25,240.74" fill="#c32a0b"/><polygon points="618.23,240.40 620.60,244.49 620.10,251.14 618.65,246.37" fill="#b41c00"/><polygon points="608.72,210.72 615.83,210.51 616.43,217.09 610.13,216.54" fill="#ff46a5"/><polygon points="610.05,216.21 616.40,216.72 617.01,223.30 611.46,222.03" fill="#f03895"/><polygon points="611.38,221.70 616.97,222.92 617.58,229.50 612.78,227.52" fill="#e12a85"/><polygon points="612.70,227.19 617.55,229.13 618.16,235.71 614.11,233.01" fill="#d21c75"/><polygon points="614.03,232.68 618.12,235.34 618.73,241.92 615.44,238.50" fill="#c30e65"/><polygon points="615.36,238.17 618.70,241.55 619.30,248.13 616.77,243.99" fill="#b40055"/><polygon points="600.97,210.08 608.29,209.00 609.93,215.35 603.33,215.67" fill="#f550fa"/><polygon points="603.20,215.35 609.83,214.99 611.47,221.35 605.55,220.94" fill="#e040e6"/><polygon points="605.42,220.63 611.38,220.99 613.01,227.34 607.78,226.22" fill="#cb30d2"/><polygon points="607.64,225.90 612.92,226.98 614.55,233.33 610.00,231.49" fill="#b620be"/><polygon points="609.87,231.18 614.46,232.97 616.10,239.32 612.23,236.77" fill="#a110aa"/><polygon points="612.09,236.45 616.01,238.96 617.64,245.31 614.45,242.04" fill="#8c0096"/><polygon points="593.11,211.16 600.11,209.00 602.73,214.90 596.33,216.21" fill="#9646fa"/><polygon points="596.15,215.93 602.59,214.56 605.21,220.46 599.36,220.99" fill="#853ae8"/><polygon points="599.18,220.70 605.06,220.13 607.69,226.02 602.39,225.76" fill="#742fd6"/><polygon points="602.21,225.47 607.54,225.69 610.16,231.58 605.42,230.53" fill="#6223c4"/><polygon points="605.24,230.24 610.01,231.25 612.64,237.14 608.45,235.30" fill="#5118b2"/><polygon points="608.27,235.02 612.49,236.81 615.11,242.71 611.49,240.07" fill="#400ca0"/><polygon points="601.83,253.14 611.30,240.22 614.75,242.59 618.41,246.68 619.92,251.84 620.56,256.58 618.62,260.89 615.18,259.59" fill="#f6f6f6" stroke="#8e8e8e" stroke-width="0.35"/><path d="M611.74 241.73Q607.11 249.48 605.49 255.07" fill="none" stroke="#5e5e5e" stroke-width="0.45"/><path d="M612.90 243.23Q608.88 250.44 607.43 255.81" fill="none" stroke="#5e5e5e" stroke-width="0.45"/><path d="M614.07 244.74Q610.64 251.41 609.37 256.55" fill="none" stroke="#5e5e5e" stroke-width="0.45"/><path d="M615.24 246.25Q612.41 252.38 611.30 257.29" fill="none" stroke="#5e5e5e" stroke-width="0.45"/><path d="M616.41 247.75Q614.18 253.35 613.24 258.03" fill="none" stroke="#5e5e5e" stroke-width="0.45"/><path d="M617.58 249.26Q615.95 254.32 615.18 258.76" fill="none" stroke="#5e5e5e" stroke-width="0.45"/><path d="M618.75 250.77Q617.72 255.29 617.12 259.50" fill="none" stroke="#5e5e5e" stroke-width="0.45"/><path d="M619.92 252.27Q619.49 256.26 619.06 260.24" fill="none" stroke="#5e5e5e" stroke-width="0.45"/><polygon points="577.83,220.30 591.18,211.26 594.69,216.34 581.38,225.34" fill="#3f6ffb"/><polygon points="581.18,225.06 594.49,216.05 598.01,221.13 584.74,230.10" fill="#1d4cf2"/><polygon points="584.54,229.81 597.81,220.84 601.33,225.92 588.09,234.85" fill="#0b30d2"/><polygon points="587.89,234.57 601.13,225.63 604.65,230.71 591.45,239.61" fill="#0a26aa"/><polygon points="591.25,239.32 604.45,230.42 607.97,235.50 594.80,244.36" fill="#081c8a"/><polygon points="594.60,244.08 607.77,235.21 611.29,240.29 598.16,249.12" fill="#05146e"/><polygon points="597.96,248.72 611.09,239.90 614.10,244.31 602.26,253.57 598.82,252.27" fill="#fcfcfc"/><circle cx="601.40" cy="250.55" r="1.3" fill="#555"/><polygon points="633.6999999999999,239 655.6999999999999,239 655.6999999999999,250" fill="#5f86b8" opacity="0.13"/><defs><linearGradient id="btt2" x1="0" y1="0" x2="0" y2="1"><stop offset="0" stop-color="#8fc8ff" stop-opacity="0.84"/><stop offset="1" stop-color="#78b8fb" stop-opacity="0.95"/></linearGradient></defs><rect x="768.3" y="188.8" width="93.4" height="92.2" fill="url(#btt2)"/><rect x="769.8" y="190.3" width="90.4" height="89.2" fill="none" stroke="#ffffff" stroke-opacity="0.45" stroke-width="1"/><rect x="768.8" y="189.3" width="92.4" height="91.2" fill="none" stroke="#878d96" stroke-width="1"/><polygon points="840.85,223.86 845.69,227.84 842.21,232.92 838.07,228.95" fill="#46f578"/><polygon points="838.23,228.67 842.41,232.63 838.93,237.71 835.45,233.76" fill="#38e067"/><polygon points="835.61,233.47 839.12,237.42 835.64,242.50 832.83,238.57" fill="#2acb56"/><polygon points="832.99,238.28 835.84,242.21 832.36,247.29 830.21,243.38" fill="#1cb645"/><polygon points="830.37,243.09 832.56,247.00 829.08,252.08 827.59,248.19" fill="#0ea134"/><polygon points="827.75,247.90 829.28,251.79 825.80,256.87 824.97,252.99" fill="#008c23"/><polygon points="834.93,219.01 840.63,221.70 838.01,227.60 833.16,224.62" fill="#b0f53c"/><polygon points="833.26,224.31 838.16,227.27 835.53,233.16 831.49,229.92" fill="#9de230"/><polygon points="831.59,229.60 835.68,232.83 833.06,238.72 829.82,235.21" fill="#8acf24"/><polygon points="829.92,234.89 833.20,238.39 830.58,244.28 828.15,240.50" fill="#76bc18"/><polygon points="828.25,240.18 830.73,243.95 828.10,249.85 826.48,245.79" fill="#63a90c"/><polygon points="826.58,245.48 828.25,249.51 825.63,255.41 824.82,251.09" fill="#509600"/><polygon points="828.25,215.03 834.71,217.08 833.10,223.45 827.59,220.96" fill="#ffd63c"/><polygon points="827.63,220.63 833.19,223.09 831.57,229.46 826.96,226.56" fill="#f0c530"/><polygon points="827.00,226.23 831.66,229.10 830.05,235.47 826.33,232.16" fill="#e1b424"/><polygon points="826.37,231.82 830.14,235.11 828.52,241.48 825.70,237.76" fill="#d2a418"/><polygon points="825.74,237.42 828.61,241.12 827.00,247.49 825.08,243.35" fill="#c3930c"/><polygon points="825.11,243.02 827.09,247.13 825.47,253.50 824.45,248.95" fill="#b48200"/><polygon points="821.26,212.23 827.93,213.09 827.44,219.75 821.67,218.20" fill="#ff6437"/><polygon points="821.65,217.86 827.46,219.37 826.97,226.03 822.07,223.84" fill="#f0562c"/><polygon points="822.05,223.50 827.00,225.65 826.50,232.31 822.46,229.47" fill="#e14721"/><polygon points="822.44,229.13 826.53,231.93 826.04,238.59 822.86,235.10" fill="#d23916"/><polygon points="822.84,234.76 826.06,238.21 825.57,244.87 823.25,240.74" fill="#c32a0b"/><polygon points="823.23,240.40 825.60,244.49 825.10,251.14 823.65,246.37" fill="#b41c00"/><polygon points="813.72,210.72 820.83,210.51 821.43,217.09 815.13,216.54" fill="#ff46a5"/><polygon points="815.05,216.21 821.40,216.72 822.01,223.30 816.46,222.03" fill="#f03895"/><polygon points="816.38,221.70 821.97,222.92 822.58,229.50 817.78,227.52" fill="#e12a85"/><polygon points="817.70,227.19 822.55,229.13 823.16,235.71 819.11,233.01" fill="#d21c75"/><polygon points="819.03,232.68 823.12,235.34 823.73,241.92 820.44,238.50" fill="#c30e65"/><polygon points="820.36,238.17 823.70,241.55 824.30,248.13 821.77,243.99" fill="#b40055"/><polygon points="805.97,210.08 813.29,209.00 814.93,215.35 808.33,215.67" fill="#f550fa"/><polygon points="808.20,215.35 814.83,214.99 816.47,221.35 810.55,220.94" fill="#e040e6"/><polygon points="810.42,220.63 816.38,220.99 818.01,227.34 812.78,226.22" fill="#cb30d2"/><polygon points="812.64,225.90 817.92,226.98 819.55,233.33 815.00,231.49" fill="#b620be"/><polygon points="814.87,231.18 819.46,232.97 821.10,239.32 817.23,236.77" fill="#a110aa"/><polygon points="817.09,236.45 821.01,238.96 822.64,245.31 819.45,242.04" fill="#8c0096"/><polygon points="798.11,211.16 805.11,209.00 807.73,214.90 801.33,216.21" fill="#9646fa"/><polygon points="801.15,215.93 807.59,214.56 810.21,220.46 804.36,220.99" fill="#853ae8"/><polygon points="804.18,220.70 810.06,220.13 812.69,226.02 807.39,225.76" fill="#742fd6"/><polygon points="807.21,225.47 812.54,225.69 815.16,231.58 810.42,230.53" fill="#6223c4"/><polygon points="810.24,230.24 815.01,231.25 817.64,237.14 813.45,235.30" fill="#5118b2"/><polygon points="813.27,235.02 817.49,236.81 820.11,242.71 816.49,240.07" fill="#400ca0"/><polygon points="806.83,253.14 816.30,240.22 819.75,242.59 823.41,246.68 824.92,251.84 825.56,256.58 823.62,260.89 820.18,259.59" fill="#f6f6f6" stroke="#8e8e8e" stroke-width="0.35"/><path d="M816.74 241.73Q812.11 249.48 810.49 255.07" fill="none" stroke="#5e5e5e" stroke-width="0.45"/><path d="M817.90 243.23Q813.88 250.44 812.43 255.81" fill="none" stroke="#5e5e5e" stroke-width="0.45"/><path d="M819.07 244.74Q815.64 251.41 814.37 256.55" fill="none" stroke="#5e5e5e" stroke-width="0.45"/><path d="M820.24 246.25Q817.41 252.38 816.30 257.29" fill="none" stroke="#5e5e5e" stroke-width="0.45"/><path d="M821.41 247.75Q819.18 253.35 818.24 258.03" fill="none" stroke="#5e5e5e" stroke-width="0.45"/><path d="M822.58 249.26Q820.95 254.32 820.18 258.76" fill="none" stroke="#5e5e5e" stroke-width="0.45"/><path d="M823.75 250.77Q822.72 255.29 822.12 259.50" fill="none" stroke="#5e5e5e" stroke-width="0.45"/><path d="M824.92 252.27Q824.49 256.26 824.06 260.24" fill="none" stroke="#5e5e5e" stroke-width="0.45"/><polygon points="782.83,220.30 796.18,211.26 799.69,216.34 786.38,225.34" fill="#3f6ffb"/><polygon points="786.18,225.06 799.49,216.05 803.01,221.13 789.74,230.10" fill="#1d4cf2"/><polygon points="789.54,229.81 802.81,220.84 806.33,225.92 793.09,234.85" fill="#0b30d2"/><polygon points="792.89,234.57 806.13,225.63 809.65,230.71 796.45,239.61" fill="#0a26aa"/><polygon points="796.25,239.32 809.45,230.42 812.97,235.50 799.80,244.36" fill="#081c8a"/><polygon points="799.60,244.08 812.77,235.21 816.29,240.29 803.16,249.12" fill="#05146e"/><polygon points="802.96,248.72 816.09,239.90 819.10,244.31 807.26,253.57 803.82,252.27" fill="#fcfcfc"/><circle cx="806.40" cy="250.55" r="1.3" fill="#555"/><polygon points="838.6999999999999,239 860.6999999999999,239 860.6999999999999,250" fill="#5f86b8" opacity="0.13"/></g></g>
<g id="i-dell"><defs><clipPath id="dfc"><rect x="401.4" y="401.4" width="138.4" height="81.3"/></clipPath><radialGradient id="dfg" cx="0.5" cy="0.5" r="0.5"><stop offset="0" stop-color="#140402"/><stop offset="0.2" stop-color="#2a0803"/><stop offset="0.36" stop-color="#7a1e0a"/><stop offset="0.55" stop-color="#a8300f"/><stop offset="0.75" stop-color="#8f250c" stop-opacity="0.8"/><stop offset="1" stop-color="#50100a" stop-opacity="0"/></radialGradient><radialGradient id="dfg2" cx="0.5" cy="0.5" r="0.5"><stop offset="0" stop-color="#0e0201"/><stop offset="0.6" stop-color="#1c0502" stop-opacity="0.9"/><stop offset="1" stop-color="#401006" stop-opacity="0"/></radialGradient></defs><rect x="401.4" y="401.4" width="138.4" height="81.3" fill="#000"/><g clip-path="url(#dfc)"><line x1="513.2" y1="441.2" x2="558.1" y2="441.0" stroke="#bf3a16" stroke-width="1.17" stroke-linecap="round"/><line x1="515.6" y1="442.0" x2="549.2" y2="443.3" stroke="#b83614" stroke-width="0.96" stroke-linecap="round"/><circle cx="549.2" cy="443.3" r="1.38" fill="#f7a04a"/><line x1="513.8" y1="443.8" x2="551.1" y2="448.5" stroke="#982410" stroke-width="1.48" stroke-linecap="round"/><line x1="509.0" y1="443.8" x2="539.5" y2="448.9" stroke="#d8561e" stroke-width="0.94" stroke-linecap="round"/><circle cx="539.5" cy="448.9" r="1.42" fill="#f3b060"/><line x1="510.4" y1="445.1" x2="550.0" y2="454.2" stroke="#e26226" stroke-width="1.21" stroke-linecap="round"/><line x1="513.5" y1="446.6" x2="546.9" y2="455.7" stroke="#a32a10" stroke-width="1.14" stroke-linecap="round"/><circle cx="546.9" cy="455.7" r="1.50" fill="#f7a04a"/><line x1="509.1" y1="446.2" x2="543.0" y2="457.1" stroke="#c8421a" stroke-width="1.24" stroke-linecap="round"/><circle cx="543.0" cy="457.1" r="1.59" fill="#f7a04a"/><line x1="515.6" y1="449.7" x2="552.4" y2="463.8" stroke="#d9501c" stroke-width="1.03" stroke-linecap="round"/><line x1="509.9" y1="448.2" x2="549.0" y2="464.9" stroke="#982410" stroke-width="0.94" stroke-linecap="round"/><line x1="508.3" y1="449.1" x2="535.8" y2="463.9" stroke="#e87030" stroke-width="0.91" stroke-linecap="round"/><circle cx="535.8" cy="463.9" r="1.09" fill="#f7a04a"/><line x1="505.7" y1="448.5" x2="541.0" y2="469.8" stroke="#bf3a16" stroke-width="1.01" stroke-linecap="round"/><circle cx="541.0" cy="469.8" r="1.36" fill="#f0904a"/><line x1="511.4" y1="453.6" x2="538.3" y2="472.4" stroke="#982410" stroke-width="0.97" stroke-linecap="round"/><circle cx="538.3" cy="472.4" r="1.00" fill="#f3b060"/><line x1="512.4" y1="455.7" x2="539.5" y2="476.6" stroke="#d9501c" stroke-width="1.03" stroke-linecap="round"/><circle cx="539.5" cy="476.6" r="1.45" fill="#f9b868"/><line x1="512.3" y1="456.1" x2="533.1" y2="472.6" stroke="#a32a10" stroke-width="0.91" stroke-linecap="round"/><line x1="506.5" y1="453.5" x2="528.1" y2="474.1" stroke="#e26226" stroke-width="1.25" stroke-linecap="round"/><circle cx="528.1" cy="474.1" r="1.26" fill="#f9b868"/><line x1="504.2" y1="452.2" x2="533.7" y2="482.9" stroke="#b83614" stroke-width="1.42" stroke-linecap="round"/><circle cx="533.7" cy="482.9" r="1.22" fill="#f3b060"/><line x1="507.0" y1="456.1" x2="534.1" y2="486.2" stroke="#b83614" stroke-width="1.34" stroke-linecap="round"/><line x1="508.4" y1="459.5" x2="533.7" y2="490.7" stroke="#c8421a" stroke-width="1.15" stroke-linecap="round"/><circle cx="533.7" cy="490.7" r="1.36" fill="#f7a04a"/><line x1="506.1" y1="458.6" x2="525.2" y2="485.0" stroke="#982410" stroke-width="1.39" stroke-linecap="round"/><circle cx="525.2" cy="485.0" r="1.36" fill="#ee8a3a"/><line x1="505.8" y1="461.6" x2="518.5" y2="483.0" stroke="#bf3a16" stroke-width="1.24" stroke-linecap="round"/><line x1="501.7" y1="455.9" x2="524.5" y2="497.7" stroke="#e26226" stroke-width="1.35" stroke-linecap="round"/><circle cx="524.5" cy="497.7" r="1.31" fill="#f0904a"/><line x1="500.8" y1="455.2" x2="518.0" y2="488.8" stroke="#b83614" stroke-width="0.96" stroke-linecap="round"/><circle cx="518.0" cy="488.8" r="1.69" fill="#f0904a"/><line x1="501.6" y1="460.5" x2="515.6" y2="494.6" stroke="#b83614" stroke-width="1.25" stroke-linecap="round"/><line x1="499.6" y1="457.7" x2="511.4" y2="490.4" stroke="#d9501c" stroke-width="0.91" stroke-linecap="round"/><line x1="499.8" y1="461.6" x2="508.8" y2="491.5" stroke="#c8421a" stroke-width="0.95" stroke-linecap="round"/><circle cx="508.8" cy="491.5" r="1.63" fill="#f7a04a"/><line x1="498.4" y1="461.7" x2="507.6" y2="501.5" stroke="#e87030" stroke-width="1.11" stroke-linecap="round"/><line x1="497.4" y1="463.6" x2="502.6" y2="494.9" stroke="#d9501c" stroke-width="1.42" stroke-linecap="round"/><circle cx="502.6" cy="494.9" r="1.46" fill="#f9b868"/><line x1="495.6" y1="455.2" x2="500.2" y2="488.4" stroke="#c8421a" stroke-width="1.28" stroke-linecap="round"/><line x1="494.9" y1="462.4" x2="496.9" y2="495.0" stroke="#bf3a16" stroke-width="1.16" stroke-linecap="round"/><line x1="494.6" y1="462.7" x2="495.8" y2="487.9" stroke="#c8421a" stroke-width="1.19" stroke-linecap="round"/><circle cx="495.8" cy="487.9" r="1.35" fill="#f7a04a"/><line x1="492.8" y1="464.4" x2="491.9" y2="492.4" stroke="#d9501c" stroke-width="1.12" stroke-linecap="round"/><circle cx="491.9" cy="492.4" r="1.14" fill="#f9b868"/><line x1="492.1" y1="464.2" x2="489.8" y2="500.3" stroke="#bf3a16" stroke-width="1.20" stroke-linecap="round"/><circle cx="489.8" cy="500.3" r="1.47" fill="#f0904a"/><line x1="491.4" y1="459.4" x2="486.3" y2="502.9" stroke="#e26226" stroke-width="1.43" stroke-linecap="round"/><circle cx="486.3" cy="502.9" r="1.64" fill="#f9b868"/><line x1="491.0" y1="456.3" x2="484.5" y2="493.6" stroke="#d9501c" stroke-width="1.33" stroke-linecap="round"/><line x1="490.0" y1="456.5" x2="481.9" y2="491.6" stroke="#a32a10" stroke-width="1.46" stroke-linecap="round"/><line x1="488.2" y1="459.6" x2="477.8" y2="494.8" stroke="#bf3a16" stroke-width="1.09" stroke-linecap="round"/><line x1="487.0" y1="460.2" x2="475.2" y2="494.1" stroke="#a32a10" stroke-width="1.24" stroke-linecap="round"/><circle cx="475.2" cy="494.1" r="1.01" fill="#f9b868"/><line x1="486.7" y1="458.4" x2="477.3" y2="481.9" stroke="#a32a10" stroke-width="1.04" stroke-linecap="round"/><circle cx="477.3" cy="481.9" r="1.69" fill="#f7a04a"/><line x1="487.3" y1="454.9" x2="471.2" y2="489.6" stroke="#e87030" stroke-width="1.48" stroke-linecap="round"/><line x1="484.8" y1="457.7" x2="471.6" y2="482.4" stroke="#d9501c" stroke-width="1.35" stroke-linecap="round"/><circle cx="471.6" cy="482.4" r="1.13" fill="#f7a04a"/><line x1="484.5" y1="456.1" x2="464.2" y2="489.3" stroke="#d8561e" stroke-width="1.20" stroke-linecap="round"/><line x1="481.0" y1="459.8" x2="462.0" y2="487.9" stroke="#e26226" stroke-width="0.95" stroke-linecap="round"/><line x1="484.0" y1="453.1" x2="461.1" y2="481.6" stroke="#d9501c" stroke-width="1.13" stroke-linecap="round"/><circle cx="461.1" cy="481.6" r="1.56" fill="#f9b868"/><line x1="481.0" y1="454.9" x2="456.1" y2="482.2" stroke="#e26226" stroke-width="0.96" stroke-linecap="round"/><line x1="477.1" y1="457.6" x2="461.2" y2="473.5" stroke="#e26226" stroke-width="1.44" stroke-linecap="round"/><line x1="479.1" y1="454.0" x2="450.0" y2="479.6" stroke="#e87030" stroke-width="1.06" stroke-linecap="round"/><line x1="479.2" y1="453.7" x2="460.3" y2="470.2" stroke="#e87030" stroke-width="1.23" stroke-linecap="round"/><line x1="482.1" y1="449.7" x2="446.7" y2="476.1" stroke="#c8421a" stroke-width="1.16" stroke-linecap="round"/><circle cx="446.7" cy="476.1" r="1.23" fill="#f9b868"/><line x1="480.6" y1="449.5" x2="454.8" y2="466.2" stroke="#d8561e" stroke-width="1.44" stroke-linecap="round"/><circle cx="454.8" cy="466.2" r="1.66" fill="#f0904a"/><line x1="473.4" y1="453.1" x2="454.8" y2="464.1" stroke="#e26226" stroke-width="1.16" stroke-linecap="round"/><circle cx="454.8" cy="464.1" r="1.45" fill="#f9b868"/><line x1="473.7" y1="451.5" x2="445.8" y2="466.0" stroke="#a32a10" stroke-width="1.30" stroke-linecap="round"/><line x1="475.2" y1="449.2" x2="448.6" y2="460.6" stroke="#b83614" stroke-width="1.48" stroke-linecap="round"/><circle cx="448.6" cy="460.6" r="1.35" fill="#f9b868"/><line x1="479.5" y1="446.8" x2="453.2" y2="457.2" stroke="#982410" stroke-width="0.92" stroke-linecap="round"/><line x1="476.5" y1="446.8" x2="438.2" y2="459.5" stroke="#c8421a" stroke-width="1.19" stroke-linecap="round"/><line x1="475.0" y1="446.7" x2="444.6" y2="455.7" stroke="#982410" stroke-width="1.06" stroke-linecap="round"/><circle cx="444.6" cy="455.7" r="1.24" fill="#f3b060"/><line x1="470.7" y1="445.7" x2="434.2" y2="452.8" stroke="#d8561e" stroke-width="1.09" stroke-linecap="round"/><circle cx="434.2" cy="452.8" r="1.02" fill="#f9b868"/><line x1="472.9" y1="444.8" x2="432.9" y2="451.7" stroke="#d9501c" stroke-width="1.02" stroke-linecap="round"/><circle cx="432.9" cy="451.7" r="1.23" fill="#ee8a3a"/><line x1="473.5" y1="443.5" x2="448.5" y2="446.3" stroke="#c8421a" stroke-width="1.41" stroke-linecap="round"/><line x1="472.6" y1="442.1" x2="433.9" y2="443.7" stroke="#d9501c" stroke-width="1.13" stroke-linecap="round"/><circle cx="433.9" cy="443.7" r="1.43" fill="#f9b868"/><line x1="471.0" y1="441.2" x2="440.3" y2="441.1" stroke="#e26226" stroke-width="1.22" stroke-linecap="round"/><line x1="471.1" y1="439.9" x2="446.0" y2="438.4" stroke="#e87030" stroke-width="1.44" stroke-linecap="round"/><circle cx="446.0" cy="438.4" r="1.62" fill="#ee8a3a"/><line x1="471.9" y1="439.2" x2="446.8" y2="436.9" stroke="#c8421a" stroke-width="0.98" stroke-linecap="round"/><circle cx="446.8" cy="436.9" r="1.18" fill="#f7a04a"/><line x1="471.5" y1="438.1" x2="442.9" y2="434.1" stroke="#b83614" stroke-width="1.02" stroke-linecap="round"/><line x1="479.0" y1="437.8" x2="441.0" y2="429.0" stroke="#e87030" stroke-width="1.45" stroke-linecap="round"/><line x1="475.1" y1="436.5" x2="437.8" y2="427.1" stroke="#d8561e" stroke-width="1.50" stroke-linecap="round"/><line x1="475.8" y1="435.0" x2="452.2" y2="426.8" stroke="#d8561e" stroke-width="1.27" stroke-linecap="round"/><line x1="478.8" y1="435.4" x2="451.2" y2="424.7" stroke="#b83614" stroke-width="1.40" stroke-linecap="round"/><line x1="480.1" y1="434.7" x2="453.4" y2="421.9" stroke="#bf3a16" stroke-width="0.95" stroke-linecap="round"/><circle cx="453.4" cy="421.9" r="1.33" fill="#f0904a"/><line x1="477.4" y1="432.7" x2="445.2" y2="416.0" stroke="#d9501c" stroke-width="1.28" stroke-linecap="round"/><circle cx="445.2" cy="416.0" r="1.13" fill="#f3b060"/><line x1="475.1" y1="430.4" x2="449.7" y2="415.4" stroke="#e26226" stroke-width="1.26" stroke-linecap="round"/><circle cx="449.7" cy="415.4" r="1.23" fill="#f7a04a"/><line x1="474.7" y1="429.2" x2="443.2" y2="409.2" stroke="#982410" stroke-width="1.24" stroke-linecap="round"/><circle cx="443.2" cy="409.2" r="1.69" fill="#f9b868"/><line x1="480.4" y1="431.1" x2="445.7" y2="404.5" stroke="#b83614" stroke-width="1.39" stroke-linecap="round"/><circle cx="445.7" cy="404.5" r="1.62" fill="#ee8a3a"/><line x1="477.1" y1="427.2" x2="449.6" y2="404.0" stroke="#982410" stroke-width="1.02" stroke-linecap="round"/><circle cx="449.6" cy="404.0" r="1.21" fill="#ee8a3a"/><line x1="476.5" y1="426.0" x2="447.3" y2="400.2" stroke="#d9501c" stroke-width="1.04" stroke-linecap="round"/><line x1="481.6" y1="428.6" x2="455.1" y2="401.0" stroke="#b83614" stroke-width="1.22" stroke-linecap="round"/><circle cx="455.1" cy="401.0" r="1.45" fill="#f0904a"/><line x1="479.5" y1="424.8" x2="453.5" y2="394.4" stroke="#d9501c" stroke-width="0.97" stroke-linecap="round"/><circle cx="453.5" cy="394.4" r="1.18" fill="#f3b060"/><line x1="484.6" y1="429.8" x2="464.4" y2="404.3" stroke="#982410" stroke-width="0.91" stroke-linecap="round"/><circle cx="464.4" cy="404.3" r="1.63" fill="#ee8a3a"/><line x1="482.7" y1="425.6" x2="458.4" y2="390.9" stroke="#c8421a" stroke-width="1.28" stroke-linecap="round"/><line x1="482.6" y1="424.5" x2="462.1" y2="393.1" stroke="#d9501c" stroke-width="1.13" stroke-linecap="round"/><line x1="482.0" y1="420.5" x2="464.6" y2="389.5" stroke="#d8561e" stroke-width="1.27" stroke-linecap="round"/><circle cx="464.6" cy="389.5" r="1.29" fill="#f0904a"/><line x1="484.9" y1="423.2" x2="471.7" y2="396.0" stroke="#a32a10" stroke-width="1.19" stroke-linecap="round"/><circle cx="471.7" cy="396.0" r="1.46" fill="#ee8a3a"/><line x1="488.2" y1="428.0" x2="471.8" y2="387.7" stroke="#d9501c" stroke-width="1.28" stroke-linecap="round"/><circle cx="471.8" cy="387.7" r="1.04" fill="#f0904a"/><line x1="487.3" y1="424.3" x2="474.7" y2="390.4" stroke="#e87030" stroke-width="0.94" stroke-linecap="round"/><line x1="488.1" y1="423.2" x2="475.6" y2="382.4" stroke="#e26226" stroke-width="0.93" stroke-linecap="round"/><circle cx="475.6" cy="382.4" r="1.10" fill="#f0904a"/><line x1="490.1" y1="425.1" x2="481.4" y2="386.0" stroke="#d9501c" stroke-width="1.27" stroke-linecap="round"/><circle cx="481.4" cy="386.0" r="1.60" fill="#f3b060"/><line x1="490.6" y1="425.9" x2="483.3" y2="388.8" stroke="#b83614" stroke-width="1.30" stroke-linecap="round"/><circle cx="483.3" cy="388.8" r="1.45" fill="#ee8a3a"/><line x1="491.4" y1="423.7" x2="486.1" y2="380.7" stroke="#b83614" stroke-width="1.47" stroke-linecap="round"/><line x1="492.2" y1="426.1" x2="487.7" y2="377.6" stroke="#d8561e" stroke-width="1.27" stroke-linecap="round"/><circle cx="487.7" cy="377.6" r="1.43" fill="#ee8a3a"/><line x1="493.3" y1="420.2" x2="492.8" y2="391.2" stroke="#a32a10" stroke-width="1.35" stroke-linecap="round"/><circle cx="492.8" cy="391.2" r="1.35" fill="#f3b060"/><line x1="494.1" y1="425.2" x2="495.6" y2="381.5" stroke="#d9501c" stroke-width="0.91" stroke-linecap="round"/><circle cx="495.6" cy="381.5" r="1.44" fill="#f7a04a"/><line x1="494.8" y1="421.8" x2="496.5" y2="393.7" stroke="#c8421a" stroke-width="1.45" stroke-linecap="round"/><circle cx="496.5" cy="393.7" r="1.44" fill="#f3b060"/><line x1="496.0" y1="422.6" x2="500.0" y2="391.2" stroke="#e87030" stroke-width="1.20" stroke-linecap="round"/><circle cx="500.0" cy="391.2" r="1.56" fill="#f7a04a"/><line x1="497.7" y1="419.4" x2="505.1" y2="379.5" stroke="#e26226" stroke-width="1.17" stroke-linecap="round"/><line x1="497.2" y1="426.1" x2="505.0" y2="393.3" stroke="#e87030" stroke-width="1.07" stroke-linecap="round"/><line x1="498.4" y1="426.1" x2="511.6" y2="384.9" stroke="#c8421a" stroke-width="1.18" stroke-linecap="round"/><circle cx="511.6" cy="384.9" r="1.06" fill="#f9b868"/><line x1="500.1" y1="423.5" x2="514.1" y2="385.0" stroke="#a32a10" stroke-width="1.39" stroke-linecap="round"/><circle cx="514.1" cy="385.0" r="1.15" fill="#ee8a3a"/><line x1="499.5" y1="427.6" x2="514.3" y2="393.3" stroke="#e87030" stroke-width="1.07" stroke-linecap="round"/><circle cx="514.3" cy="393.3" r="1.46" fill="#ee8a3a"/><line x1="503.5" y1="420.4" x2="516.2" y2="393.7" stroke="#bf3a16" stroke-width="1.24" stroke-linecap="round"/><line x1="505.3" y1="421.2" x2="521.2" y2="393.8" stroke="#a32a10" stroke-width="1.17" stroke-linecap="round"/><circle cx="521.2" cy="393.8" r="1.17" fill="#f9b868"/><line x1="502.9" y1="426.2" x2="521.6" y2="395.7" stroke="#982410" stroke-width="1.25" stroke-linecap="round"/><line x1="503.9" y1="426.9" x2="525.1" y2="397.4" stroke="#b83614" stroke-width="1.40" stroke-linecap="round"/><circle cx="525.1" cy="397.4" r="1.06" fill="#f3b060"/><line x1="507.5" y1="423.4" x2="531.9" y2="392.1" stroke="#e26226" stroke-width="1.21" stroke-linecap="round"/><circle cx="531.9" cy="392.1" r="1.21" fill="#f9b868"/><line x1="508.0" y1="424.0" x2="528.5" y2="399.3" stroke="#d8561e" stroke-width="1.08" stroke-linecap="round"/><circle cx="528.5" cy="399.3" r="1.06" fill="#ee8a3a"/><line x1="509.8" y1="424.9" x2="527.4" y2="407.3" stroke="#b83614" stroke-width="0.96" stroke-linecap="round"/><line x1="509.1" y1="426.8" x2="534.5" y2="403.1" stroke="#d8561e" stroke-width="1.10" stroke-linecap="round"/><circle cx="534.5" cy="403.1" r="1.24" fill="#ee8a3a"/><line x1="509.9" y1="428.4" x2="537.5" y2="406.5" stroke="#d8561e" stroke-width="1.38" stroke-linecap="round"/><circle cx="537.5" cy="406.5" r="1.64" fill="#f9b868"/><line x1="511.4" y1="427.8" x2="541.1" y2="405.6" stroke="#d9501c" stroke-width="1.38" stroke-linecap="round"/><line x1="513.5" y1="428.6" x2="543.3" y2="409.6" stroke="#d8561e" stroke-width="1.12" stroke-linecap="round"/><circle cx="543.3" cy="409.6" r="1.30" fill="#f7a04a"/><line x1="506.9" y1="433.3" x2="545.9" y2="410.1" stroke="#982410" stroke-width="1.31" stroke-linecap="round"/><circle cx="545.9" cy="410.1" r="1.30" fill="#f0904a"/><line x1="514.5" y1="430.1" x2="535.4" y2="418.9" stroke="#a32a10" stroke-width="1.34" stroke-linecap="round"/><circle cx="535.4" cy="418.9" r="1.54" fill="#f3b060"/><line x1="506.8" y1="434.9" x2="543.6" y2="417.6" stroke="#bf3a16" stroke-width="1.45" stroke-linecap="round"/><circle cx="543.6" cy="417.6" r="1.14" fill="#f7a04a"/><line x1="512.1" y1="433.8" x2="547.5" y2="419.7" stroke="#bf3a16" stroke-width="1.26" stroke-linecap="round"/><circle cx="547.5" cy="419.7" r="1.63" fill="#f3b060"/><line x1="515.5" y1="433.8" x2="555.0" y2="420.6" stroke="#d8561e" stroke-width="1.47" stroke-linecap="round"/><circle cx="555.0" cy="420.6" r="1.34" fill="#ee8a3a"/><line x1="516.3" y1="434.9" x2="550.7" y2="425.3" stroke="#c8421a" stroke-width="1.19" stroke-linecap="round"/><circle cx="550.7" cy="425.3" r="1.15" fill="#f7a04a"/><line x1="515.0" y1="436.2" x2="557.4" y2="426.2" stroke="#d8561e" stroke-width="1.36" stroke-linecap="round"/><line x1="516.5" y1="437.0" x2="556.4" y2="429.7" stroke="#bf3a16" stroke-width="1.44" stroke-linecap="round"/><circle cx="556.4" cy="429.7" r="1.50" fill="#f3b060"/><line x1="509.1" y1="439.6" x2="542.7" y2="436.2" stroke="#e87030" stroke-width="0.99" stroke-linecap="round"/><line x1="508.9" y1="440.6" x2="554.4" y2="438.9" stroke="#a32a10" stroke-width="1.21" stroke-linecap="round"/><circle cx="554.4" cy="438.9" r="1.54" fill="#f9b868"/><ellipse cx="493.6" cy="441.2" rx="39" ry="37" fill="url(#dfg)"/><circle cx="520.0" cy="441.4" r="1.09" fill="#c23a14" opacity="0.9"/><circle cx="507.0" cy="448.8" r="0.92" fill="#e0602a" opacity="0.9"/><circle cx="512.0" cy="425.9" r="1.17" fill="#d8501c" opacity="0.9"/><circle cx="470.4" cy="427.1" r="0.61" fill="#e86a2a" opacity="0.9"/><circle cx="498.9" cy="454.0" r="0.65" fill="#e0602a" opacity="0.9"/><circle cx="500.1" cy="428.6" r="0.85" fill="#9c2810" opacity="0.9"/><circle cx="464.7" cy="442.3" r="0.79" fill="#e86a2a" opacity="0.9"/><circle cx="476.1" cy="453.0" r="1.00" fill="#f08a44" opacity="0.9"/><circle cx="504.1" cy="445.9" r="0.66" fill="#c23a14" opacity="0.9"/><circle cx="478.5" cy="453.1" r="0.99" fill="#d8501c" opacity="0.9"/><circle cx="511.1" cy="442.6" r="0.89" fill="#e0602a" opacity="0.9"/><circle cx="490.3" cy="453.0" r="1.11" fill="#d8501c" opacity="0.9"/><circle cx="507.2" cy="421.0" r="0.69" fill="#9c2810" opacity="0.9"/><circle cx="473.6" cy="420.5" r="0.78" fill="#e0602a" opacity="0.9"/><circle cx="484.3" cy="456.4" r="0.65" fill="#e0602a" opacity="0.9"/><circle cx="500.2" cy="457.4" r="0.80" fill="#d8501c" opacity="0.9"/><circle cx="513.6" cy="434.0" r="0.98" fill="#e0602a" opacity="0.9"/><circle cx="476.9" cy="447.0" r="0.68" fill="#d8501c" opacity="0.9"/><circle cx="513.1" cy="454.4" r="0.71" fill="#e0602a" opacity="0.9"/><circle cx="497.4" cy="451.3" r="0.96" fill="#f08a44" opacity="0.9"/><circle cx="505.9" cy="449.0" r="1.19" fill="#c23a14" opacity="0.9"/><circle cx="470.3" cy="451.5" r="1.15" fill="#e86a2a" opacity="0.9"/><circle cx="475.5" cy="450.2" r="0.72" fill="#e0602a" opacity="0.9"/><circle cx="507.8" cy="460.3" r="0.80" fill="#f08a44" opacity="0.9"/><circle cx="484.8" cy="446.6" r="0.97" fill="#f08a44" opacity="0.9"/><circle cx="483.0" cy="464.7" r="1.00" fill="#c23a14" opacity="0.9"/><circle cx="485.6" cy="434.7" r="0.71" fill="#e86a2a" opacity="0.9"/><circle cx="487.0" cy="458.8" r="0.83" fill="#9c2810" opacity="0.9"/><circle cx="467.9" cy="439.7" r="0.97" fill="#d8501c" opacity="0.9"/><circle cx="507.4" cy="462.4" r="0.93" fill="#e86a2a" opacity="0.9"/><circle cx="481.6" cy="457.2" r="0.94" fill="#c23a14" opacity="0.9"/><circle cx="502.8" cy="468.4" r="1.02" fill="#e0602a" opacity="0.9"/><circle cx="513.2" cy="432.8" r="0.98" fill="#d8501c" opacity="0.9"/><circle cx="497.4" cy="452.2" r="0.89" fill="#c23a14" opacity="0.9"/><circle cx="479.1" cy="449.5" r="1.16" fill="#d8501c" opacity="0.9"/><circle cx="481.2" cy="455.9" r="0.87" fill="#d8501c" opacity="0.9"/><circle cx="491.7" cy="426.5" r="0.93" fill="#9c2810" opacity="0.9"/><circle cx="473.9" cy="433.3" r="0.70" fill="#e86a2a" opacity="0.9"/><circle cx="492.8" cy="413.3" r="0.96" fill="#e86a2a" opacity="0.9"/><circle cx="512.6" cy="459.7" r="1.01" fill="#e86a2a" opacity="0.9"/><circle cx="477.1" cy="460.2" r="1.10" fill="#e86a2a" opacity="0.9"/><circle cx="501.9" cy="460.5" r="0.87" fill="#d8501c" opacity="0.9"/><circle cx="472.5" cy="455.8" r="0.68" fill="#e0602a" opacity="0.9"/><circle cx="494.6" cy="414.3" r="0.97" fill="#f08a44" opacity="0.9"/><circle cx="477.5" cy="421.7" r="0.72" fill="#c23a14" opacity="0.9"/><circle cx="481.0" cy="443.8" r="0.67" fill="#f08a44" opacity="0.9"/><circle cx="479.7" cy="450.5" r="0.76" fill="#c23a14" opacity="0.9"/><circle cx="478.5" cy="434.3" r="1.07" fill="#e0602a" opacity="0.9"/><circle cx="489.0" cy="415.9" r="1.18" fill="#f08a44" opacity="0.9"/><circle cx="477.9" cy="429.8" r="1.14" fill="#f08a44" opacity="0.9"/><circle cx="511.8" cy="430.1" r="1.05" fill="#f08a44" opacity="0.9"/><circle cx="463.8" cy="443.9" r="0.85" fill="#e0602a" opacity="0.9"/><circle cx="474.1" cy="449.8" r="0.80" fill="#9c2810" opacity="0.9"/><circle cx="475.3" cy="438.8" r="0.79" fill="#d8501c" opacity="0.9"/><circle cx="516.7" cy="449.5" r="1.04" fill="#f08a44" opacity="0.9"/><circle cx="473.1" cy="426.8" r="1.13" fill="#e86a2a" opacity="0.9"/><circle cx="504.3" cy="430.8" r="0.75" fill="#f08a44" opacity="0.9"/><circle cx="514.2" cy="420.1" r="1.02" fill="#f08a44" opacity="0.9"/><circle cx="479.0" cy="438.8" r="0.99" fill="#e86a2a" opacity="0.9"/><circle cx="519.3" cy="431.1" r="1.18" fill="#e0602a" opacity="0.9"/><circle cx="479.8" cy="417.6" r="0.94" fill="#f08a44" opacity="0.9"/><circle cx="505.4" cy="460.9" r="0.94" fill="#f08a44" opacity="0.9"/><circle cx="503.4" cy="434.4" r="0.67" fill="#c23a14" opacity="0.9"/><circle cx="465.4" cy="434.4" r="0.78" fill="#d8501c" opacity="0.9"/><circle cx="492.2" cy="430.8" r="0.64" fill="#c23a14" opacity="0.9"/><circle cx="514.4" cy="425.1" r="0.68" fill="#f08a44" opacity="0.9"/><circle cx="488.4" cy="427.5" r="0.62" fill="#e86a2a" opacity="0.9"/><circle cx="506.6" cy="431.6" r="0.69" fill="#f08a44" opacity="0.9"/><circle cx="497.9" cy="416.0" r="0.72" fill="#c23a14" opacity="0.9"/><circle cx="508.7" cy="422.7" r="0.72" fill="#d8501c" opacity="0.9"/><circle cx="502.6" cy="426.7" r="0.61" fill="#f08a44" opacity="0.9"/><circle cx="477.8" cy="423.2" r="0.72" fill="#9c2810" opacity="0.9"/><circle cx="484.3" cy="431.0" r="0.99" fill="#d8501c" opacity="0.9"/><circle cx="484.5" cy="465.9" r="1.12" fill="#e86a2a" opacity="0.9"/><circle cx="490.7" cy="428.8" r="1.17" fill="#e0602a" opacity="0.9"/><circle cx="496.9" cy="423.2" r="0.73" fill="#c23a14" opacity="0.9"/><circle cx="485.1" cy="463.9" r="0.76" fill="#c23a14" opacity="0.9"/><circle cx="489.9" cy="421.5" r="1.07" fill="#e86a2a" opacity="0.9"/><circle cx="477.4" cy="457.9" r="0.95" fill="#d8501c" opacity="0.9"/><circle cx="495.7" cy="457.1" r="1.00" fill="#c23a14" opacity="0.9"/><circle cx="489.8" cy="463.7" r="0.88" fill="#d8501c" opacity="0.9"/><circle cx="518.8" cy="454.3" r="0.92" fill="#d8501c" opacity="0.9"/><circle cx="514.7" cy="447.4" r="0.92" fill="#e86a2a" opacity="0.9"/><circle cx="474.7" cy="451.1" r="0.77" fill="#c23a14" opacity="0.9"/><circle cx="494.1" cy="426.3" r="1.04" fill="#e86a2a" opacity="0.9"/><circle cx="519.0" cy="445.8" r="1.19" fill="#c23a14" opacity="0.9"/><circle cx="512.4" cy="445.2" r="0.83" fill="#9c2810" opacity="0.9"/><circle cx="511.7" cy="432.6" r="0.64" fill="#c23a14" opacity="0.9"/><circle cx="498.3" cy="413.4" r="0.99" fill="#e86a2a" opacity="0.9"/><circle cx="497.8" cy="421.3" r="1.10" fill="#9c2810" opacity="0.9"/><circle cx="473.9" cy="419.0" r="1.17" fill="#e0602a" opacity="0.9"/><circle cx="505.4" cy="463.9" r="0.67" fill="#c23a14" opacity="0.9"/><circle cx="472.1" cy="450.4" r="1.06" fill="#9c2810" opacity="0.9"/><circle cx="499.5" cy="416.1" r="0.76" fill="#c23a14" opacity="0.9"/><circle cx="467.6" cy="433.8" r="0.90" fill="#9c2810" opacity="0.9"/><circle cx="515.0" cy="446.0" r="0.63" fill="#e0602a" opacity="0.9"/><circle cx="467.4" cy="450.0" r="0.69" fill="#e86a2a" opacity="0.9"/><circle cx="513.4" cy="443.4" r="0.90" fill="#f08a44" opacity="0.9"/><circle cx="489.0" cy="414.5" r="0.64" fill="#d8501c" opacity="0.9"/><circle cx="511.5" cy="429.4" r="0.95" fill="#9c2810" opacity="0.9"/><circle cx="489.7" cy="419.1" r="0.79" fill="#d8501c" opacity="0.9"/><circle cx="509.3" cy="445.5" r="1.04" fill="#9c2810" opacity="0.9"/><circle cx="498.5" cy="416.4" r="0.65" fill="#f08a44" opacity="0.9"/><circle cx="499.4" cy="429.1" r="0.75" fill="#e86a2a" opacity="0.9"/><circle cx="470.4" cy="441.7" r="1.07" fill="#9c2810" opacity="0.9"/><circle cx="510.5" cy="448.0" r="1.02" fill="#e86a2a" opacity="0.9"/><circle cx="485.3" cy="413.3" r="0.89" fill="#c23a14" opacity="0.9"/><circle cx="495.7" cy="411.6" r="1.05" fill="#c23a14" opacity="0.9"/><circle cx="464.2" cy="437.2" r="0.74" fill="#d8501c" opacity="0.9"/><circle cx="503.5" cy="433.0" r="0.93" fill="#f08a44" opacity="0.9"/><circle cx="465.3" cy="446.2" r="1.01" fill="#d8501c" opacity="0.9"/><circle cx="487.5" cy="412.3" r="0.74" fill="#9c2810" opacity="0.9"/><circle cx="493.2" cy="462.2" r="0.85" fill="#c23a14" opacity="0.9"/><circle cx="506.1" cy="448.7" r="0.80" fill="#e86a2a" opacity="0.9"/><circle cx="515.7" cy="438.6" r="0.70" fill="#d8501c" opacity="0.9"/><circle cx="467.9" cy="425.9" r="0.81" fill="#e0602a" opacity="0.9"/><circle cx="484.3" cy="415.5" r="1.15" fill="#9c2810" opacity="0.9"/><circle cx="505.6" cy="465.6" r="0.83" fill="#c23a14" opacity="0.9"/><circle cx="496.4" cy="427.2" r="0.75" fill="#e86a2a" opacity="0.9"/><circle cx="500.6" cy="416.1" r="0.72" fill="#f08a44" opacity="0.9"/><circle cx="497.9" cy="460.1" r="0.88" fill="#e86a2a" opacity="0.9"/><circle cx="471.1" cy="442.6" r="1.12" fill="#c23a14" opacity="0.9"/><circle cx="498.6" cy="458.1" r="0.63" fill="#d8501c" opacity="0.9"/><circle cx="488.8" cy="469.8" r="0.61" fill="#9c2810" opacity="0.9"/><circle cx="499.9" cy="455.1" r="0.94" fill="#f08a44" opacity="0.9"/><circle cx="485.1" cy="429.6" r="0.82" fill="#d8501c" opacity="0.9"/><circle cx="510.0" cy="464.8" r="0.68" fill="#e86a2a" opacity="0.9"/><circle cx="495.1" cy="467.9" r="0.61" fill="#d8501c" opacity="0.9"/><circle cx="485.9" cy="457.1" r="1.11" fill="#d8501c" opacity="0.9"/><circle cx="482.5" cy="451.5" r="1.00" fill="#9c2810" opacity="0.9"/><ellipse cx="493.6" cy="441.2" rx="12" ry="11" fill="url(#dfg2)"/></g><defs><linearGradient id="btd" x1="0" y1="0" x2="0" y2="1"><stop offset="0" stop-color="#8fc8ff" stop-opacity="0.84"/><stop offset="1" stop-color="#78b8fb" stop-opacity="0.95"/></linearGradient></defs><rect x="358.3" y="438.0" width="93.4" height="92.2" fill="url(#btd)"/><rect x="359.8" y="439.5" width="90.4" height="89.2" fill="none" stroke="#ffffff" stroke-opacity="0.45" stroke-width="1"/><rect x="358.8" y="438.5" width="92.4" height="91.2" fill="none" stroke="#878d96" stroke-width="1"/><polygon points="430.85,473.06 435.69,477.04 432.21,482.12 428.07,478.15" fill="#46f578"/><polygon points="428.23,477.87 432.41,481.83 428.93,486.91 425.45,482.96" fill="#38e067"/><polygon points="425.61,482.67 429.12,486.62 425.64,491.70 422.83,487.77" fill="#2acb56"/><polygon points="422.99,487.48 425.84,491.41 422.36,496.49 420.21,492.58" fill="#1cb645"/><polygon points="420.37,492.29 422.56,496.20 419.08,501.28 417.59,497.39" fill="#0ea134"/><polygon points="417.75,497.10 419.28,500.99 415.80,506.07 414.97,502.19" fill="#008c23"/><polygon points="424.93,468.21 430.63,470.90 428.01,476.80 423.16,473.82" fill="#b0f53c"/><polygon points="423.26,473.51 428.16,476.47 425.53,482.36 421.49,479.12" fill="#9de230"/><polygon points="421.59,478.80 425.68,482.03 423.06,487.92 419.82,484.41" fill="#8acf24"/><polygon points="419.92,484.09 423.20,487.59 420.58,493.48 418.15,489.70" fill="#76bc18"/><polygon points="418.25,489.38 420.73,493.15 418.10,499.05 416.48,494.99" fill="#63a90c"/><polygon points="416.58,494.68 418.25,498.71 415.63,504.61 414.82,500.29" fill="#509600"/><polygon points="418.25,464.23 424.71,466.28 423.10,472.65 417.59,470.16" fill="#ffd63c"/><polygon points="417.63,469.83 423.19,472.29 421.57,478.66 416.96,475.76" fill="#f0c530"/><polygon points="417.00,475.43 421.66,478.30 420.05,484.67 416.33,481.36" fill="#e1b424"/><polygon points="416.37,481.02 420.14,484.31 418.52,490.68 415.70,486.96" fill="#d2a418"/><polygon points="415.74,486.62 418.61,490.32 417.00,496.69 415.08,492.55" fill="#c3930c"/><polygon points="415.11,492.22 417.09,496.33 415.47,502.70 414.45,498.15" fill="#b48200"/><polygon points="411.26,461.43 417.93,462.29 417.44,468.95 411.67,467.40" fill="#ff6437"/><polygon points="411.65,467.06 417.46,468.57 416.97,475.23 412.07,473.04" fill="#f0562c"/><polygon points="412.05,472.70 417.00,474.85 416.50,481.51 412.46,478.67" fill="#e14721"/><polygon points="412.44,478.33 416.53,481.13 416.04,487.79 412.86,484.30" fill="#d23916"/><polygon points="412.84,483.96 416.06,487.41 415.57,494.07 413.25,489.94" fill="#c32a0b"/><polygon points="413.23,489.60 415.60,493.69 415.10,500.34 413.65,495.57" fill="#b41c00"/><polygon points="403.72,459.92 410.83,459.71 411.43,466.29 405.13,465.74" fill="#ff46a5"/><polygon points="405.05,465.41 411.40,465.92 412.01,472.50 406.46,471.23" fill="#f03895"/><polygon points="406.38,470.90 411.97,472.12 412.58,478.70 407.78,476.72" fill="#e12a85"/><polygon points="407.70,476.39 412.55,478.33 413.16,484.91 409.11,482.21" fill="#d21c75"/><polygon points="409.03,481.88 413.12,484.54 413.73,491.12 410.44,487.70" fill="#c30e65"/><polygon points="410.36,487.37 413.70,490.75 414.30,497.33 411.77,493.19" fill="#b40055"/><polygon points="395.97,459.28 403.29,458.20 404.93,464.55 398.33,464.87" fill="#f550fa"/><polygon points="398.20,464.55 404.83,464.19 406.47,470.55 400.55,470.14" fill="#e040e6"/><polygon points="400.42,469.83 406.38,470.19 408.01,476.54 402.78,475.42" fill="#cb30d2"/><polygon points="402.64,475.10 407.92,476.18 409.55,482.53 405.00,480.69" fill="#b620be"/><polygon points="404.87,480.38 409.46,482.17 411.10,488.52 407.23,485.97" fill="#a110aa"/><polygon points="407.09,485.65 411.01,488.16 412.64,494.51 409.45,491.24" fill="#8c0096"/><polygon points="388.11,460.36 395.11,458.20 397.73,464.10 391.33,465.41" fill="#9646fa"/><polygon points="391.15,465.13 397.59,463.76 400.21,469.66 394.36,470.19" fill="#853ae8"/><polygon points="394.18,469.90 400.06,469.33 402.69,475.22 397.39,474.96" fill="#742fd6"/><polygon points="397.21,474.67 402.54,474.89 405.16,480.78 400.42,479.73" fill="#6223c4"/><polygon points="400.24,479.44 405.01,480.45 407.64,486.34 403.45,484.50" fill="#5118b2"/><polygon points="403.27,484.22 407.49,486.01 410.11,491.91 406.49,489.27" fill="#400ca0"/><polygon points="396.83,502.34 406.30,489.42 409.75,491.79 413.41,495.88 414.92,501.04 415.56,505.78 413.62,510.09 410.18,508.79" fill="#f6f6f6" stroke="#8e8e8e" stroke-width="0.35"/><path d="M406.74 490.93Q402.11 498.68 400.49 504.27" fill="none" stroke="#5e5e5e" stroke-width="0.45"/><path d="M407.90 492.43Q403.88 499.64 402.43 505.01" fill="none" stroke="#5e5e5e" stroke-width="0.45"/><path d="M409.07 493.94Q405.64 500.61 404.37 505.75" fill="none" stroke="#5e5e5e" stroke-width="0.45"/><path d="M410.24 495.45Q407.41 501.58 406.30 506.49" fill="none" stroke="#5e5e5e" stroke-width="0.45"/><path d="M411.41 496.95Q409.18 502.55 408.24 507.23" fill="none" stroke="#5e5e5e" stroke-width="0.45"/><path d="M412.58 498.46Q410.95 503.52 410.18 507.96" fill="none" stroke="#5e5e5e" stroke-width="0.45"/><path d="M413.75 499.97Q412.72 504.49 412.12 508.70" fill="none" stroke="#5e5e5e" stroke-width="0.45"/><path d="M414.92 501.47Q414.49 505.46 414.06 509.44" fill="none" stroke="#5e5e5e" stroke-width="0.45"/><polygon points="372.83,469.50 386.18,460.46 389.69,465.54 376.38,474.54" fill="#3f6ffb"/><polygon points="376.18,474.26 389.49,465.25 393.01,470.33 379.74,479.30" fill="#1d4cf2"/><polygon points="379.54,479.01 392.81,470.04 396.33,475.12 383.09,484.05" fill="#0b30d2"/><polygon points="382.89,483.77 396.13,474.83 399.65,479.91 386.45,488.81" fill="#0a26aa"/><polygon points="386.25,488.52 399.45,479.62 402.97,484.70 389.80,493.56" fill="#081c8a"/><polygon points="389.60,493.28 402.77,484.41 406.29,489.49 393.16,498.32" fill="#05146e"/><polygon points="392.96,497.92 406.09,489.10 409.10,493.51 397.26,502.77 393.82,501.47" fill="#fcfcfc"/><circle cx="396.40" cy="499.75" r="1.3" fill="#555"/><circle cx="503.0" cy="516.6" r="13.4" fill="#fff" stroke="#0b7fc1" stroke-width="1.8"/><text x="503.0" y="519.6" text-anchor="middle" font-family="Liberation Sans, sans-serif" font-weight="bold" font-size="8.4" fill="#0b7fc1" textLength="21.6" lengthAdjust="spacingAndGlyphs" stroke="#0b7fc1" stroke-width="0.45">DELL</text></g>
<g id="i-hc"><rect x="401.4" y="646.2" width="145.4" height="90" fill="#000"/><rect x="401.9" y="646.7" width="144.4" height="89" fill="none" stroke="#3c3c3c" stroke-width="1"/><rect x="358.6" y="686.4" width="93.6" height="92.4" fill="#fff"/><rect x="359.1" y="686.9" width="92.6" height="91.4" fill="none" stroke="#8c8c8c" stroke-width="1"/><rect x="359.6" y="688.4" width="91" height="89.6" fill="#000"/><rect x="362.8" y="691.2" width="85.2" height="29.6" fill="#0000ff"/><rect x="369.20000000000005" y="702" width="60" height="7.4" fill="#ffffff"/><rect x="369.20000000000005" y="730.4" width="47.6" height="7.4" fill="#dcdc00"/><rect x="606.4" y="646.2" width="145.4" height="90" fill="#000"/><rect x="606.9" y="646.7" width="144.4" height="89" fill="none" stroke="#3c3c3c" stroke-width="1"/><rect x="563.6" y="686.4" width="93.6" height="92.4" fill="#fff"/><rect x="564.1" y="686.9" width="92.6" height="91.4" fill="none" stroke="#8c8c8c" stroke-width="1"/><rect x="564.6" y="688.4" width="91" height="89.6" fill="#000"/><rect x="567.8000000000001" y="691.2" width="85.2" height="29.6" fill="#00ffff"/><rect x="574.2" y="702" width="60" height="7.4" fill="#000000"/><rect x="574.2" y="730.4" width="47.6" height="7.4" fill="#00ff00"/><rect x="811.4" y="646.2" width="145.4" height="90" fill="#000"/><rect x="811.9" y="646.7" width="144.4" height="89" fill="none" stroke="#3c3c3c" stroke-width="1"/><rect x="768.6" y="686.4" width="93.6" height="92.4" fill="#fff"/><rect x="769.1" y="686.9" width="92.6" height="91.4" fill="none" stroke="#8c8c8c" stroke-width="1"/><rect x="769.6" y="688.4" width="91" height="89.6" fill="#000"/><rect x="772.8000000000001" y="691.2" width="85.2" height="29.6" fill="#37006e"/><rect x="779.2" y="702" width="60" height="7.4" fill="#ffffff"/><rect x="779.2" y="730.4" width="47.6" height="7.4" fill="#ffffff"/><rect x="1016.5" y="646.5" width="144.4" height="89.4" fill="#fff" stroke="#6a6a6a" stroke-width="1"/><rect x="973.4" y="686.2" width="94" height="93.6" fill="#fff"/><path d="M974.4 779V687.2H1066.6" fill="none" stroke="#a8a8a8" stroke-width="2"/><path d="M973.4 779H1066.6V686.2" fill="none" stroke="#4a4a4a" stroke-width="2"/><rect x="977.8000000000001" y="691.2" width="85.2" height="29.6" fill="#000000"/><rect x="984.2" y="702" width="60" height="7.4" fill="#ffffff"/><rect x="984.2" y="730.4" width="47.6" height="7.4" fill="#000000"/></g>
<g id="i-scroll"><path d="M1881.6 257.4L1886.6 251.6L1891.6 257.4" fill="none" stroke="#5a5a5a" stroke-width="2.8"/><path d="M1881.6 813.8L1886.6 819.6L1891.6 813.8" fill="none" stroke="#5a5a5a" stroke-width="2.8"/></g>
<g id="i-snd"><defs>
<linearGradient id="sndN" x1="0" y1="0" x2="1" y2="1"><stop offset="0" stop-color="#5cc0f6"/><stop offset="0.6" stop-color="#1f98e6"/><stop offset="1" stop-color="#0f78c8"/></linearGradient>
<linearGradient id="sndK" x1="0" y1="0" x2="0" y2="1"><stop offset="0" stop-color="#6a6a6a"/><stop offset="1" stop-color="#141414"/></linearGradient>
</defs><polygon points="1270.45,912.36 1296.31,898.80 1353.87,907.98 1354.91,912.98 1320.81,932.38 1271.28,915.90" fill="url(#sndK)" stroke="#2a2a2a" stroke-width="0.8" stroke-linejoin="round"/><polygon points="1271.28,912.15 1296.52,899.43 1353.24,908.39 1320.29,925.50" fill="#5a5a5a"/><polygon points="1273.16,911.73 1294.22,900.89 1340.10,908.60 1319.46,923.41" fill="#f2f2f2"/><line x1="1277.37" y1="912.79" x2="1298.39" y2="901.59" stroke="#9a9a9a" stroke-width="0.5"/><line x1="1281.58" y1="913.85" x2="1302.57" y2="902.29" stroke="#9a9a9a" stroke-width="0.5"/><line x1="1285.79" y1="914.92" x2="1306.74" y2="902.99" stroke="#9a9a9a" stroke-width="0.5"/><line x1="1290.00" y1="915.98" x2="1310.91" y2="903.69" stroke="#9a9a9a" stroke-width="0.5"/><line x1="1294.20" y1="917.04" x2="1315.08" y2="904.39" stroke="#9a9a9a" stroke-width="0.5"/><line x1="1298.41" y1="918.10" x2="1319.25" y2="905.10" stroke="#9a9a9a" stroke-width="0.5"/><line x1="1302.62" y1="919.16" x2="1323.42" y2="905.80" stroke="#9a9a9a" stroke-width="0.5"/><line x1="1306.83" y1="920.22" x2="1327.59" y2="906.50" stroke="#9a9a9a" stroke-width="0.5"/><line x1="1311.04" y1="921.29" x2="1331.76" y2="907.20" stroke="#9a9a9a" stroke-width="0.5"/><line x1="1315.25" y1="922.35" x2="1335.93" y2="907.90" stroke="#9a9a9a" stroke-width="0.5"/><line x1="1299.73" y1="901.81" x2="1287.54" y2="908.38" stroke="#161616" stroke-width="1.7"/><line x1="1304.32" y1="902.58" x2="1292.15" y2="909.38" stroke="#161616" stroke-width="1.7"/><line x1="1312.58" y1="903.97" x2="1300.46" y2="911.18" stroke="#161616" stroke-width="1.7"/><line x1="1316.70" y1="904.67" x2="1304.61" y2="912.08" stroke="#161616" stroke-width="1.7"/><line x1="1320.83" y1="905.36" x2="1308.76" y2="912.98" stroke="#161616" stroke-width="1.7"/><line x1="1329.09" y1="906.75" x2="1317.06" y2="914.79" stroke="#161616" stroke-width="1.7"/><line x1="1333.22" y1="907.45" x2="1321.21" y2="915.69" stroke="#161616" stroke-width="1.7"/><polygon points="1331.76,905.27 1344.28,907.14 1340.10,909.65 1328.63,907.56" fill="#1a1a1a"/><ellipse cx="1285.67" cy="894.63" rx="5.01" ry="3.34" transform="rotate(-18 1285.67 894.63)" fill="url(#sndN)"/><polygon points="1289.01,894.63 1289.01,881.28 1290.47,880.45 1290.71,894.63" fill="#2a9ee8"/><path d="M1290.47,880.45 C1293.49,883.17 1297.42,885.29 1294.21,892.24 C1295.61,887.71 1292.88,886.19 1290.47,885.29Z" fill="url(#sndN)"/><ellipse cx="1307.99" cy="884.41" rx="7.92" ry="5.21" transform="rotate(-18 1307.99 884.41)" fill="url(#sndN)"/><polygon points="1312.26,884.41 1312.26,864.60 1314.56,863.76 1314.94,884.41" fill="#2a9ee8"/><path d="M1314.56,863.76 C1319.36,868.08 1325.59,871.44 1320.51,882.47 C1322.72,875.28 1318.40,872.88 1314.56,871.44Z" fill="url(#sndN)"/><ellipse cx="1334.06" cy="893.80" rx="10.43" ry="6.88" transform="rotate(-18 1334.06 893.80)" fill="url(#sndN)"/><polygon points="1340.37,893.80 1340.37,866.68 1343.17,865.85 1343.64,893.80" fill="#2a9ee8"/><path d="M1343.17,865.85 C1349.01,871.11 1356.60,875.19 1350.42,888.62 C1353.10,879.86 1347.85,876.94 1343.17,875.19Z" fill="url(#sndN)"/></g>
<g id="i-ss"><defs>
<linearGradient id="ssS" x1="0" y1="0" x2="1" y2="0.3"><stop offset="0" stop-color="#5f86b8"/><stop offset="0.35" stop-color="#7fb3b6"/><stop offset="0.7" stop-color="#9ec9a8"/><stop offset="1" stop-color="#8fb4c4"/></linearGradient>
<radialGradient id="ssB" cx="0.5" cy="0.35" r="0.65"><stop offset="0" stop-color="#ffffff"/><stop offset="1" stop-color="#c4c4c4"/></radialGradient>
<linearGradient id="ssF" x1="0" y1="0" x2="1" y2="1"><stop offset="0" stop-color="#e6e6e6"/><stop offset="1" stop-color="#b8b8b8"/></linearGradient>
</defs><ellipse cx="1703.72" cy="920.74" rx="25.82" ry="7.51" fill="url(#ssB)" stroke="#c8c8c8" stroke-width="0.5"/><polygon points="1690.42,909.47 1717.03,912.60 1720.16,921.21 1687.29,919.64" fill="#d2d2d2"/><polygon points="1670.08,863.15 1733.93,869.41 1731.42,912.91 1663.19,904.15" fill="url(#ssF)" stroke="#b4b4b4" stroke-width="0.6"/><polygon points="1673.52,865.96 1728.61,871.91 1727.98,909.15 1666.95,901.33" fill="url(#ssS)"/><polygon points="1673.52,865.96 1685.73,867.21 1679.47,902.90 1666.95,901.33" fill="#4f78b0" opacity="0.65"/><circle cx="1691.99" cy="876.29" r="5.01" fill="#e8f0b0" fill-opacity="0.45" stroke="#e6e27a" stroke-width="0.8"/><circle cx="1703.72" cy="876.92" r="4.69" fill="#b8e4b0" fill-opacity="0.45" stroke="#9ed49a" stroke-width="0.8"/><circle cx="1714.37" cy="876.60" r="4.69" fill="#f0f0b0" fill-opacity="0.45" stroke="#e8e070" stroke-width="0.8"/><circle cx="1685.73" cy="883.65" r="4.07" fill="#b0d8f0" fill-opacity="0.5" stroke="#8cc0ea" stroke-width="0.8"/><circle cx="1723.60" cy="916.51" r="8.14" fill="#c8f0c8" fill-opacity="0.75" stroke="#8fdc9a" stroke-width="0.8"/><circle cx="1740.50" cy="904.77" r="6.26" fill="#d4ecfb" fill-opacity="0.85" stroke="#8cc6f0" stroke-width="0.8"/><circle cx="1741.44" cy="915.41" r="2.97" fill="#c8f0c8" fill-opacity="0.85" stroke="#8fdc9a" stroke-width="0.8"/><circle cx="1741.75" cy="924.33" r="4.85" fill="#fbd0ee" fill-opacity="0.85" stroke="#f09ad8" stroke-width="0.8"/><circle cx="1727.36" cy="929.50" r="4.85" fill="#cfe6fa" fill-opacity="0.85" stroke="#8cc6f0" stroke-width="0.8"/><ellipse cx="1703.10" cy="900.55" rx="20.50" ry="16.90" fill="#ffffff" fill-opacity="0.15" stroke="#e10000" stroke-width="5.48"/><line x1="1688.70" y1="888.97" x2="1717.50" y2="912.13" stroke="#e10000" stroke-width="5.16"/><circle cx="1707.64" cy="896.95" r="4.07" fill="#d0e8f8" fill-opacity="0.5" stroke="#a8d0ee" stroke-width="0.8"/><circle cx="1691.99" cy="905.09" r="3.13" fill="#f0f0a0" fill-opacity="0.5" stroke="#e8e060" stroke-width="0.8"/><circle cx="1703.72" cy="908.22" r="3.76" fill="#b8eab8" fill-opacity="0.5" stroke="#90d890" stroke-width="0.8"/><circle cx="1715.77" cy="901.96" r="3.13" fill="#f4c8ec" fill-opacity="0.5" stroke="#eaa0da" stroke-width="0.8"/></g>
</svg>
<span class="t" id="title" style="left:881.00px;top:8.00px;font-size:21.74px;color:#1c1c1c;transform:translate(0.47px,0.00px) scaleX(1.0322);">Personalization</span>
<div id="c1"><span class="t" id="c1_0" style="left:208.00px;top:52.00px;font-size:17.55px;color:#1a1a1a;transform:translate(0.09px,0.00px) scaleX(1.0456);">Control</span> <span class="t" id="c1_1" style="left:272.00px;top:52.00px;font-size:17.55px;color:#1a1a1a;transform:translate(0.86px,0.00px) scaleX(0.9252);">Panel</span></div>
<div id="c2"><span class="t" id="c2_0" style="left:347.00px;top:52.00px;font-size:17.55px;color:#1a1a1a;transform:translate(0.38px,0.00px) scaleX(0.9976);">All</span> <span class="t" id="c2_1" style="left:372.00px;top:52.00px;font-size:17.55px;color:#1a1a1a;transform:translate(0.14px,0.00px) scaleX(1.0586);">Control</span> <span class="t" id="c2_2" style="left:436.00px;top:52.00px;font-size:17.55px;color:#1a1a1a;transform:translate(0.99px,0.00px) scaleX(0.9255);">Panel</span> <span class="t" id="c2_3" style="left:483.00px;top:52.00px;font-size:17.55px;color:#1a1a1a;transform:translate(0.84px,0.00px) scaleX(1.0156);">Items</span></div>
<span class="t" id="c3" style="left:560.00px;top:52.00px;font-size:17.55px;color:#1a1a1a;transform:translate(0.36px,0.00px) scaleX(0.9940);">Personalization</span>
<div id="srch"><span class="t" id="srch_0" style="left:1576.00px;top:53.00px;font-size:17.55px;color:#6d6d6d;transform:translate(0.80px,0.00px) scaleX(0.9407);">Search</span> <span class="t" id="srch_1" style="left:1634.00px;top:53.00px;font-size:17.55px;color:#6d6d6d;transform:translate(0.81px,0.00px) scaleX(0.9906);">Control</span> <span class="t" id="srch_2" style="left:1696.00px;top:53.00px;font-size:17.55px;color:#6d6d6d;transform:translate(0.07px,0.00px) scaleX(0.9968);">Panel</span></div>
<span class="t" id="m1" style="left:17.00px;top:98.00px;font-size:17.55px;color:#000;transform:translate(0.13px,0.00px) scaleX(0.9299);">File</span>
<span class="t" id="m2" style="left:59.00px;top:98.00px;font-size:17.55px;color:#000;transform:translate(0.08px,0.00px) scaleX(0.9966);">Edit</span>
<span class="t" id="m3" style="left:105.00px;top:98.00px;font-size:17.55px;color:#000;transform:translate(0.26px,0.00px) scaleX(0.9822);">View</span>
<span class="t" id="m4" style="left:158.00px;top:98.00px;font-size:17.55px;color:#000;transform:translate(0.34px,0.00px) scaleX(1.0377);">Tools</span>
<span class="t" id="m5" style="left:217.00px;top:98.00px;font-size:17.55px;color:#000;transform:translate(0.46px,0.00px) scaleX(1.0013);">Help</span>
<div id="s1"><span class="t" id="s1_0" style="left:43.00px;top:154.00px;font-size:17.55px;color:#1e3287;transform:translate(0.13px,0.00px) scaleX(1.0536);">Control</span> <span class="t" id="s1_1" style="left:107.00px;top:154.00px;font-size:17.55px;color:#1e3287;transform:translate(0.23px,0.00px) scaleX(0.9427);">Panel</span> <span class="t" id="s1_2" style="left:154.00px;top:154.00px;font-size:17.55px;color:#1e3287;transform:translate(0.37px,0.00px) scaleX(1.0596);">Home</span></div>
<div id="s2"><span class="t" id="s2_0" style="left:42.00px;top:209.00px;font-size:17.55px;color:#1e3287;transform:translate(0.35px,0.00px) scaleX(0.9728);">Change</span> <span class="t" id="s2_1" style="left:107.00px;top:209.00px;font-size:17.55px;color:#1e3287;transform:translate(0.62px,0.00px) scaleX(1.0443);">desktop</span> <span class="t" id="s2_2" style="left:177.00px;top:209.00px;font-size:17.55px;color:#1e3287;transform:translate(0.16px,0.00px) scaleX(0.9951);">icons</span></div>
<div id="s3"><span class="t" id="s3_0" style="left:42.00px;top:246.00px;font-size:17.55px;color:#1e3287;transform:translate(0.35px,0.00px) scaleX(0.9728);">Change</span> <span class="t" id="s3_1" style="left:107.00px;top:246.00px;font-size:17.55px;color:#1e3287;transform:translate(0.35px,0.00px) scaleX(1.0147);">mouse</span> <span class="t" id="s3_2" style="left:166.00px;top:246.00px;font-size:17.55px;color:#1e3287;transform:translate(0.61px,0.00px) scaleX(1.0355);">pointers</span></div>
<div id="h1"><span class="t" id="h1_0" style="left:333.00px;top:163.00px;font-size:23.40px;color:#003399;transform:translate(0.83px,0.00px) scaleX(0.9943);">Change</span> <span class="t" id="h1_1" style="left:423.00px;top:163.00px;font-size:23.40px;color:#003399;transform:translate(0.28px,0.00px) scaleX(1.0343);">the</span> <span class="t" id="h1_2" style="left:464.00px;top:163.00px;font-size:23.40px;color:#003399;transform:translate(0.42px,0.00px) scaleX(0.9705);">visuals</span> <span class="t" id="h1_3" style="left:541.00px;top:163.00px;font-size:23.40px;color:#003399;transform:translate(0.41px,0.00px) scaleX(1.0206);">and</span> <span class="t" id="h1_4" style="left:588.00px;top:163.00px;font-size:23.40px;color:#003399;transform:translate(0.26px,0.00px) scaleX(1.0032);">sounds</span> <span class="t" id="h1_5" style="left:671.00px;top:163.00px;font-size:23.40px;color:#003399;transform:translate(0.95px,0.00px) scaleX(1.0374);">on</span> <span class="t" id="h1_6" style="left:706.00px;top:163.00px;font-size:23.40px;color:#003399;transform:translate(0.21px,0.00px) scaleX(1.0519);">your</span> <span class="t" id="h1_7" style="left:760.00px;top:163.00px;font-size:23.40px;color:#003399;transform:translate(0.90px,0.00px) scaleX(1.0584);">computer</span></div>
<div id="p1"><span class="t" id="p1_0" style="left:333.00px;top:209.00px;font-size:17.55px;color:#000;transform:translate(0.63px,0.00px) scaleX(0.9180);">Click</span> <span class="t" id="p1_1" style="left:374.00px;top:209.00px;font-size:17.55px;color:#000;transform:translate(0.89px,0.00px) scaleX(0.7634);">a</span> <span class="t" id="p1_2" style="left:388.00px;top:209.00px;font-size:17.55px;color:#000;transform:translate(0.50px,0.00px) scaleX(1.0109);">theme</span> <span class="t" id="p1_3" style="left:443.00px;top:209.00px;font-size:17.55px;color:#000;transform:translate(0.33px,0.00px) scaleX(1.1373);">to</span> <span class="t" id="p1_4" style="left:465.00px;top:209.00px;font-size:17.55px;color:#000;transform:translate(0.47px,0.00px) scaleX(0.9625);">change</span> <span class="t" id="p1_5" style="left:527.00px;top:209.00px;font-size:17.55px;color:#000;transform:translate(0.41px,0.00px) scaleX(1.0265);">the</span> <span class="t" id="p1_6" style="left:558.00px;top:209.00px;font-size:17.55px;color:#000;transform:translate(0.22px,0.00px) scaleX(1.0244);">desktop</span> <span class="t" id="p1_7" style="left:628.00px;top:209.00px;font-size:17.55px;color:#000;transform:translate(0.07px,0.00px) scaleX(1.0179);">background,</span> <span class="t" id="p1_8" style="left:732.00px;top:209.00px;font-size:17.55px;color:#000;transform:translate(0.62px,0.00px) scaleX(1.0266);">color,</span> <span class="t" id="p1_9" style="left:781.00px;top:209.00px;font-size:17.55px;color:#000;transform:translate(0.37px,0.00px) scaleX(0.9906);">sounds,</span> <span class="t" id="p1_10" style="left:848.00px;top:209.00px;font-size:17.55px;color:#000;transform:translate(0.64px,0.00px) scaleX(0.9736);">and</span> <span class="t" id="p1_11" style="left:883.00px;top:209.00px;font-size:17.55px;color:#000;transform:translate(0.54px,0.00px) scaleX(0.9351);">screen</span> <span class="t" id="p1_12" style="left:938.00px;top:209.00px;font-size:17.55px;color:#000;transform:translate(0.89px,0.00px) scaleX(0.9219);">saver</span> <span class="t" id="p1_13" style="left:984.00px;top:209.00px;font-size:17.55px;color:#000;transform:translate(0.87px,0.00px) scaleX(0.8974);">all</span> <span class="t" id="p1_14" style="left:1006.00px;top:209.00px;font-size:17.55px;color:#000;transform:translate(0.35px,0.00px) scaleX(0.9540);">at</span> <span class="t" id="p1_15" style="left:1026.00px;top:209.00px;font-size:17.55px;color:#000;transform:translate(0.47px,0.00px) scaleX(0.9699);">once.</span></div>
<span class="t" id="l1" style="left:415.00px;top:297.00px;font-size:17.55px;color:#000;transform:translate(0.40px,0.00px) scaleX(1.0291);">Windows</span>
<span class="t" id="l2" style="left:637.00px;top:297.00px;font-size:17.55px;color:#000;transform:translate(0.12px,0.00px) scaleX(0.9562);">Earth</span>
<span class="t" id="l3" style="left:832.00px;top:297.00px;font-size:17.55px;color:#000;transform:translate(0.53px,0.00px) scaleX(0.9669);">Flowers</span>
<div id="g1"><span class="t" id="g1_0" style="left:350.00px;top:346.00px;font-size:17.55px;color:#1e3287;transform:translate(0.84px,0.00px) scaleX(0.9938);">Installed</span> <span class="t" id="g1_1" style="left:422.00px;top:346.00px;font-size:17.55px;color:#1e3287;transform:translate(0.31px,0.00px) scaleX(0.9375);">Themes</span> <span class="t" id="g1_2" style="left:487.00px;top:346.00px;font-size:17.55px;color:#1e3287;transform:translate(0.15px,0.00px) scaleX(0.9273);">(1)</span></div>
<span class="t" id="l4" style="left:437.00px;top:546.00px;font-size:17.55px;color:#000;transform:translate(0.90px,0.00px) scaleX(0.9672);">Dell</span>
<div id="g2"><span class="t" id="g2_0" style="left:350.00px;top:595.00px;font-size:17.55px;color:#1e3287;transform:translate(0.81px,0.00px) scaleX(1.0288);">High</span> <span class="t" id="g2_1" style="left:393.00px;top:595.00px;font-size:17.55px;color:#1e3287;transform:translate(0.62px,0.00px) scaleX(0.9876);">Contrast</span> <span class="t" id="g2_2" style="left:466.00px;top:595.00px;font-size:17.55px;color:#1e3287;transform:translate(0.11px,0.00px) scaleX(0.9355);">Themes</span> <span class="t" id="g2_3" style="left:531.00px;top:595.00px;font-size:17.55px;color:#1e3287;transform:translate(0.86px,0.00px) scaleX(0.8991);">(4)</span></div>
<div id="l5"><span class="t" id="l5_0" style="left:384.00px;top:795.00px;font-size:17.55px;color:#000;transform:translate(0.10px,0.00px) scaleX(1.0442);">High</span> <span class="t" id="l5_1" style="left:427.00px;top:795.00px;font-size:17.55px;color:#000;transform:translate(0.07px,0.00px) scaleX(1.0144);">Contrast</span> <span class="t" id="l5_2" style="left:499.00px;top:795.00px;font-size:17.55px;color:#000;transform:translate(0.62px,0.00px) scaleX(0.9985);">#1</span></div>
<div id="l6"><span class="t" id="l6_0" style="left:589.00px;top:795.00px;font-size:17.55px;color:#000;transform:translate(0.10px,0.00px) scaleX(1.0442);">High</span> <span class="t" id="l6_1" style="left:632.00px;top:795.00px;font-size:17.55px;color:#000;transform:translate(0.07px,0.00px) scaleX(1.0144);">Contrast</span> <span class="t" id="l6_2" style="left:705.00px;top:795.00px;font-size:17.55px;color:#000;transform:translate(0.18px,0.00px) scaleX(1.0188);">#2</span></div>
<div id="l7"><span class="t" id="l7_0" style="left:785.00px;top:795.00px;font-size:17.55px;color:#000;transform:translate(0.00px,0.00px) scaleX(1.0495);">High</span> <span class="t" id="l7_1" style="left:828.00px;top:795.00px;font-size:17.55px;color:#000;transform:translate(0.20px,0.00px) scaleX(1.0115);">Contrast</span> <span class="t" id="l7_2" style="left:900.00px;top:795.00px;font-size:17.55px;color:#000;transform:translate(0.91px,0.00px) scaleX(0.9257);">Black</span></div>
<div id="l8"><span class="t" id="l8_0" style="left:987.00px;top:795.00px;font-size:17.55px;color:#000;transform:translate(0.11px,0.00px) scaleX(1.0410);">High</span> <span class="t" id="l8_1" style="left:1030.00px;top:795.00px;font-size:17.55px;color:#000;transform:translate(0.11px,0.00px) scaleX(0.9973);">Contrast</span> <span class="t" id="l8_2" style="left:1102.00px;top:795.00px;font-size:17.55px;color:#000;transform:translate(0.52px,0.00px) scaleX(1.0189);">White</span></div>
<div id="a0"><span class="t" id="a0_0" style="left:42.00px;top:864.00px;font-size:17.55px;color:#6d6d6d;transform:translate(0.98px,0.00px) scaleX(0.8738);">See</span> <span class="t" id="a0_1" style="left:75.00px;top:864.00px;font-size:17.55px;color:#6d6d6d;transform:translate(0.38px,0.00px) scaleX(0.9756);">also</span></div>
<span class="t" id="a1" style="left:43.00px;top:901.00px;font-size:17.55px;color:#1e3287;transform:translate(0.15px,0.00px) scaleX(0.9818);">Display</span>
<span class="t" id="a2" style="left:43.00px;top:938.00px;font-size:17.55px;color:#1e3287;transform:translate(0.39px,0.00px) scaleX(0.9765);">Taskbar</span>
<div id="a3"><span class="t" id="a3_0" style="left:43.00px;top:975.00px;font-size:17.55px;color:#1e3287;transform:translate(0.34px,0.00px) scaleX(0.8192);">Ease</span> <span class="t" id="a3_1" style="left:82.00px;top:975.00px;font-size:17.55px;color:#1e3287;transform:translate(0.89px,0.00px) scaleX(1.1092);">of</span> <span class="t" id="a3_2" style="left:105.00px;top:975.00px;font-size:17.55px;color:#1e3287;transform:translate(0.15px,0.00px) scaleX(0.9092);">Access</span> <span class="t" id="a3_3" style="left:162.00px;top:975.00px;font-size:17.55px;color:#1e3287;transform:translate(0.87px,0.00px) scaleX(0.9596);">Center</span></div>
<div id="b1"><span class="t" id="b1_0" style="left:446.00px;top:949.00px;font-size:17.55px;color:#0066cc;transform:translate(0.04px,0.00px) scaleX(1.0195);">Desktop</span> <span class="t" id="b1_1" style="left:518.00px;top:949.00px;font-size:17.55px;color:#0066cc;transform:translate(0.11px,0.00px) scaleX(1.0054);">Background</span></div>
<span class="t" id="b1s" style="left:498.00px;top:982.00px;font-size:17.55px;color:#6d6d6d;transform:translate(0.60px,0.00px) scaleX(1.0296);">leopard</span>
<span class="t" id="b2" style="left:899.00px;top:949.00px;font-size:17.55px;color:#0066cc;transform:translate(0.36px,0.00px) scaleX(1.0346);">Color</span>
<span class="t" id="b2s" style="left:890.00px;top:982.00px;font-size:17.55px;color:#6d6d6d;transform:translate(0.28px,0.00px) scaleX(1.0280);">Custom</span>
<span class="t" id="b3" style="left:1283.00px;top:949.00px;font-size:17.55px;color:#0066cc;transform:translate(0.14px,0.00px) scaleX(1.0090);">Sounds</span>
<div id="b3s"><span class="t" id="b3s_0" style="left:1245.00px;top:982.00px;font-size:17.55px;color:#6d6d6d;transform:translate(0.21px,0.00px) scaleX(1.0326);">Windows</span> <span class="t" id="b3s_1" style="left:1325.00px;top:982.00px;font-size:17.55px;color:#6d6d6d;transform:translate(0.08px,0.00px) scaleX(1.0099);">Default</span></div>
<div id="b4"><span class="t" id="b4_0" style="left:1655.00px;top:949.00px;font-size:17.55px;color:#0066cc;transform:translate(0.37px,0.00px) scaleX(0.9336);">Screen</span> <span class="t" id="b4_1" style="left:1712.00px;top:949.00px;font-size:17.55px;color:#0066cc;transform:translate(0.89px,0.00px) scaleX(0.9282);">Saver</span></div>
<span class="t" id="b4s" style="left:1683.00px;top:982.00px;font-size:17.55px;color:#6d6d6d;transform:translate(0.89px,0.00px) scaleX(1.0164);">None</span>
</body></html>
